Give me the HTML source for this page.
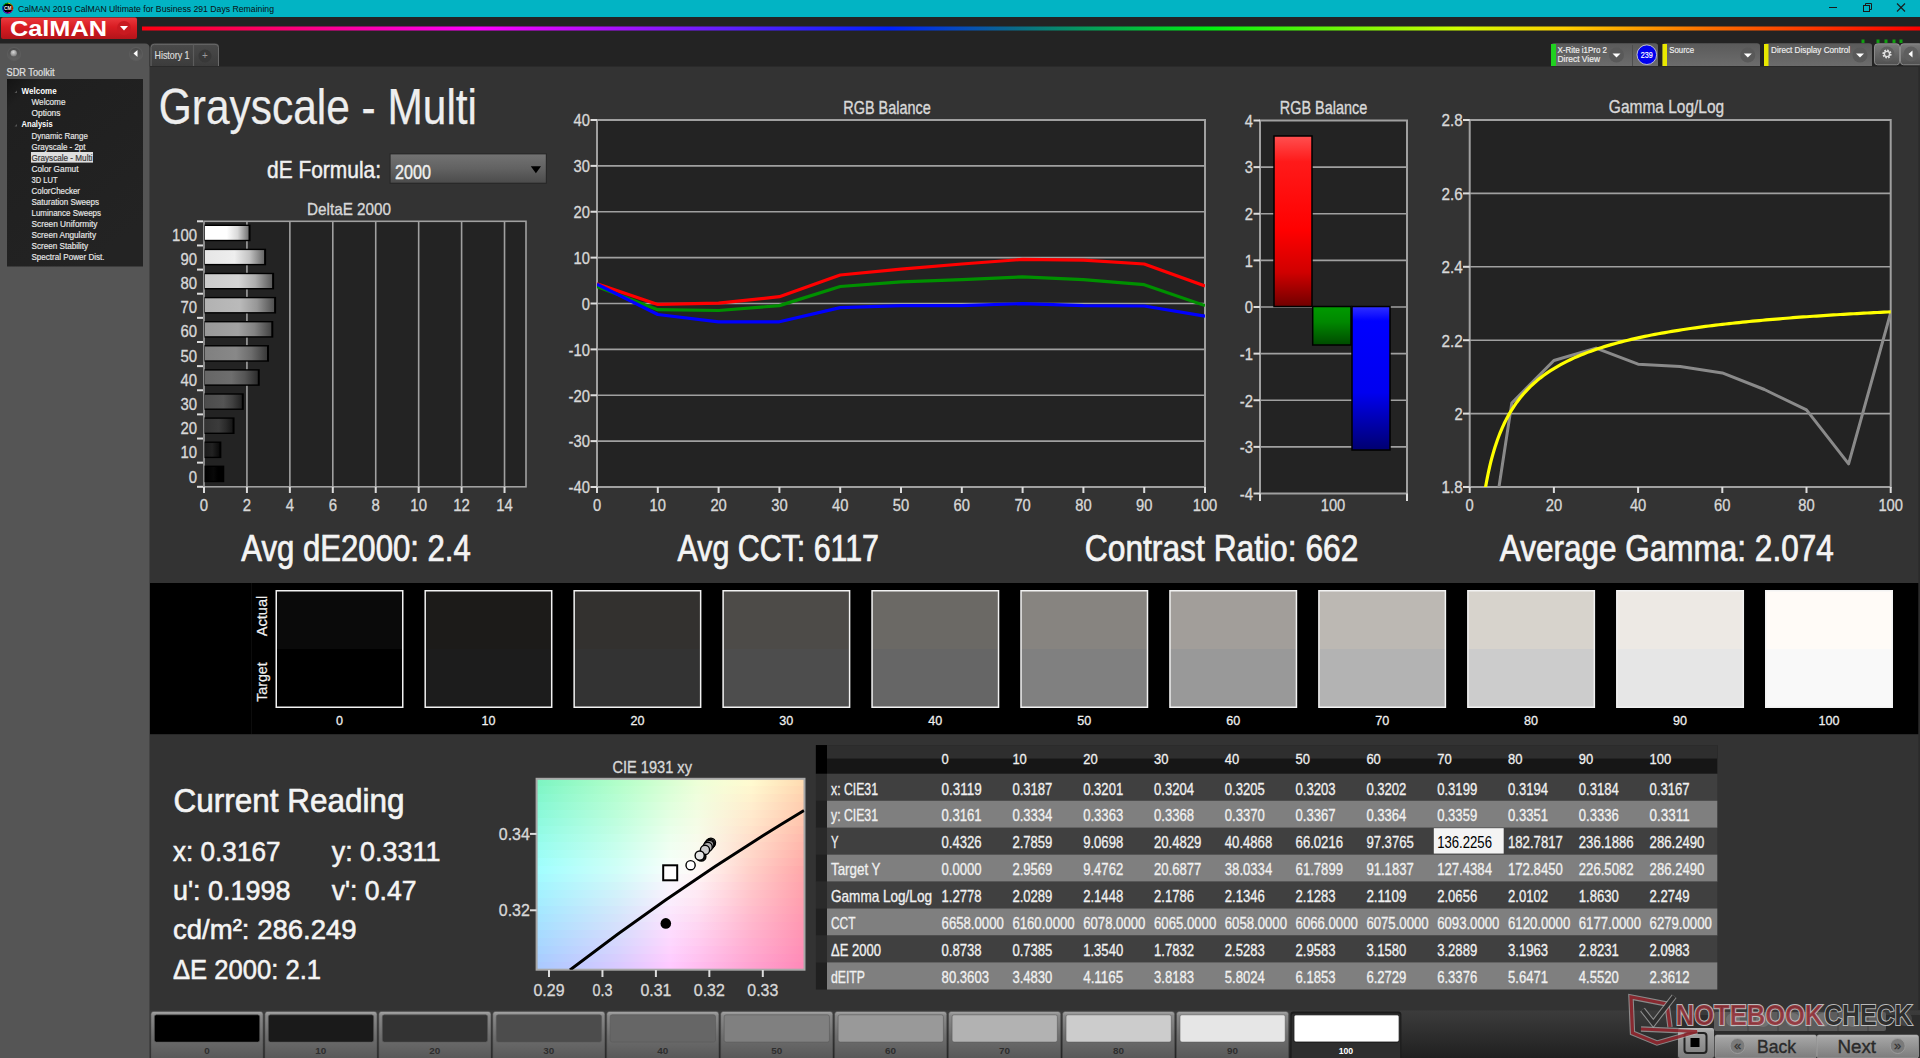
<!DOCTYPE html>
<html><head><meta charset="utf-8"><title>CalMAN Grayscale - Multi</title>
<style>html,body{margin:0;padding:0;background:#333;overflow:hidden;width:1920px;height:1058px}svg{display:block}text{font-family:"Liberation Sans",sans-serif}</style>
</head><body>
<svg width="1920" height="1058" viewBox="0 0 1920 1058" font-family="Liberation Sans, sans-serif">
<defs><linearGradient id="gLogo" x1="0" y1="0" x2="0" y2="1"><stop offset="0" stop-color="#ea3a3e"/><stop offset="0.45" stop-color="#d81c22"/><stop offset="1" stop-color="#b3141a"/></linearGradient><linearGradient id="gRain" x1="0" y1="0" x2="1" y2="0"><stop offset="0" stop-color="#ff0010"/><stop offset="0.19" stop-color="#ff00ff"/><stop offset="0.33" stop-color="#6020ff"/><stop offset="0.42" stop-color="#0020ff"/><stop offset="0.49" stop-color="#0a6a8a"/><stop offset="0.6" stop-color="#00ee10"/><stop offset="0.74" stop-color="#d0ff00"/><stop offset="0.8" stop-color="#ffd000"/><stop offset="0.88" stop-color="#ff7000"/><stop offset="1" stop-color="#ff0000"/></linearGradient><linearGradient id="gBtn" x1="0" y1="0" x2="0" y2="1"><stop offset="0" stop-color="#4a4a4a"/><stop offset="1" stop-color="#626262"/></linearGradient><radialGradient id="gDot" cx="0.45" cy="0.35" r="0.7"><stop offset="0" stop-color="#d8d8d8"/><stop offset="1" stop-color="#777"/></radialGradient><linearGradient id="gTree" x1="0" y1="0" x2="0.6" y2="1"><stop offset="0" stop-color="#141414"/><stop offset="0.12" stop-color="#1f1f1f"/><stop offset="1" stop-color="#232323"/></linearGradient><linearGradient id="gTab" x1="0" y1="0" x2="0" y2="1"><stop offset="0" stop-color="#4a4a4a"/><stop offset="1" stop-color="#3c3c3c"/></linearGradient><linearGradient id="gBox" x1="0" y1="0" x2="0" y2="1"><stop offset="0" stop-color="#5a5a5a"/><stop offset="1" stop-color="#6c6c6c"/></linearGradient><linearGradient id="gSq" x1="0" y1="0" x2="0" y2="1"><stop offset="0" stop-color="#7a7a7a"/><stop offset="1" stop-color="#505050"/></linearGradient><linearGradient id="gDrop" x1="0" y1="0" x2="0" y2="1"><stop offset="0" stop-color="#727272"/><stop offset="0.5" stop-color="#626262"/><stop offset="1" stop-color="#4c4c4c"/></linearGradient><linearGradient id="gDE100" x1="0" y1="0" x2="1" y2="0"><stop offset="0" stop-color="rgb(255,255,255)"/><stop offset="0.5" stop-color="rgb(255,255,255)"/><stop offset="0.75" stop-color="rgb(216,216,216)"/><stop offset="1" stop-color="rgb(114,114,114)"/></linearGradient><linearGradient id="gDE90" x1="0" y1="0" x2="1" y2="0"><stop offset="0" stop-color="rgb(230,230,230)"/><stop offset="0.5" stop-color="rgb(238,238,238)"/><stop offset="0.75" stop-color="rgb(195,195,195)"/><stop offset="1" stop-color="rgb(103,103,103)"/></linearGradient><linearGradient id="gDE80" x1="0" y1="0" x2="1" y2="0"><stop offset="0" stop-color="rgb(204,204,204)"/><stop offset="0.5" stop-color="rgb(212,212,212)"/><stop offset="0.75" stop-color="rgb(173,173,173)"/><stop offset="1" stop-color="rgb(91,91,91)"/></linearGradient><linearGradient id="gDE70" x1="0" y1="0" x2="1" y2="0"><stop offset="0" stop-color="rgb(178,178,178)"/><stop offset="0.5" stop-color="rgb(186,186,186)"/><stop offset="0.75" stop-color="rgb(151,151,151)"/><stop offset="1" stop-color="rgb(80,80,80)"/></linearGradient><linearGradient id="gDE60" x1="0" y1="0" x2="1" y2="0"><stop offset="0" stop-color="rgb(153,153,153)"/><stop offset="0.5" stop-color="rgb(161,161,161)"/><stop offset="0.75" stop-color="rgb(130,130,130)"/><stop offset="1" stop-color="rgb(68,68,68)"/></linearGradient><linearGradient id="gDE50" x1="0" y1="0" x2="1" y2="0"><stop offset="0" stop-color="rgb(128,128,128)"/><stop offset="0.5" stop-color="rgb(136,136,136)"/><stop offset="0.75" stop-color="rgb(108,108,108)"/><stop offset="1" stop-color="rgb(57,57,57)"/></linearGradient><linearGradient id="gDE40" x1="0" y1="0" x2="1" y2="0"><stop offset="0" stop-color="rgb(102,102,102)"/><stop offset="0.5" stop-color="rgb(110,110,110)"/><stop offset="0.75" stop-color="rgb(86,86,86)"/><stop offset="1" stop-color="rgb(45,45,45)"/></linearGradient><linearGradient id="gDE30" x1="0" y1="0" x2="1" y2="0"><stop offset="0" stop-color="rgb(76,76,76)"/><stop offset="0.5" stop-color="rgb(84,84,84)"/><stop offset="0.75" stop-color="rgb(64,64,64)"/><stop offset="1" stop-color="rgb(34,34,34)"/></linearGradient><linearGradient id="gDE20" x1="0" y1="0" x2="1" y2="0"><stop offset="0" stop-color="rgb(51,51,51)"/><stop offset="0.5" stop-color="rgb(59,59,59)"/><stop offset="0.75" stop-color="rgb(43,43,43)"/><stop offset="1" stop-color="rgb(22,22,22)"/></linearGradient><linearGradient id="gDE10" x1="0" y1="0" x2="1" y2="0"><stop offset="0" stop-color="rgb(26,26,26)"/><stop offset="0.5" stop-color="rgb(34,34,34)"/><stop offset="0.75" stop-color="rgb(22,22,22)"/><stop offset="1" stop-color="rgb(11,11,11)"/></linearGradient><linearGradient id="gDE0" x1="0" y1="0" x2="1" y2="0"><stop offset="0" stop-color="rgb(0,0,0)"/><stop offset="0.5" stop-color="rgb(8,8,8)"/><stop offset="0.75" stop-color="rgb(0,0,0)"/><stop offset="1" stop-color="rgb(0,0,0)"/></linearGradient><linearGradient id="gRed" x1="0" y1="0" x2="0" y2="1"><stop offset="0" stop-color="#ff5050"/><stop offset="0.15" stop-color="#ff1a1a"/><stop offset="0.55" stop-color="#ff0000"/><stop offset="0.8" stop-color="#d00000"/><stop offset="1" stop-color="#700000"/></linearGradient><linearGradient id="gGrn" x1="0" y1="0" x2="0" y2="1"><stop offset="0" stop-color="#009a00"/><stop offset="0.4" stop-color="#008800"/><stop offset="1" stop-color="#004a00"/></linearGradient><linearGradient id="gBlu" x1="0" y1="0" x2="0" y2="1"><stop offset="0" stop-color="#3030ff"/><stop offset="0.1" stop-color="#0000ff"/><stop offset="0.6" stop-color="#0000f0"/><stop offset="1" stop-color="#000070"/></linearGradient><linearGradient id="gCie0" x1="0" y1="0" x2="1" y2="0"><stop offset="0.0" stop-color="#7cf5c3"/><stop offset="0.1" stop-color="#8df8c5"/><stop offset="0.2" stop-color="#9ffbc7"/><stop offset="0.3" stop-color="#b1fec9"/><stop offset="0.4" stop-color="#c4ffcd"/><stop offset="0.5" stop-color="#d9ffd3"/><stop offset="0.6" stop-color="#edffd8"/><stop offset="0.7" stop-color="#f7fdd5"/><stop offset="0.8" stop-color="#fffad0"/><stop offset="0.9" stop-color="#ffeac0"/><stop offset="1.0" stop-color="#ffdab0"/></linearGradient><linearGradient id="gCie1" x1="0" y1="0" x2="1" y2="0"><stop offset="0.0" stop-color="#7ff6c8"/><stop offset="0.1" stop-color="#91f9ca"/><stop offset="0.2" stop-color="#a2fbcc"/><stop offset="0.3" stop-color="#b4fecd"/><stop offset="0.4" stop-color="#c7ffd1"/><stop offset="0.5" stop-color="#dbffd7"/><stop offset="0.6" stop-color="#eefedb"/><stop offset="0.7" stop-color="#f8fbd6"/><stop offset="0.8" stop-color="#fff6cf"/><stop offset="0.9" stop-color="#ffe6bf"/><stop offset="1.0" stop-color="#ffd5af"/></linearGradient><linearGradient id="gCie2" x1="0" y1="0" x2="1" y2="0"><stop offset="0.0" stop-color="#82f7ce"/><stop offset="0.1" stop-color="#94f9cf"/><stop offset="0.2" stop-color="#a5fcd0"/><stop offset="0.3" stop-color="#b6fed2"/><stop offset="0.4" stop-color="#caffd5"/><stop offset="0.5" stop-color="#deffda"/><stop offset="0.6" stop-color="#f0fede"/><stop offset="0.7" stop-color="#f9f8d7"/><stop offset="0.8" stop-color="#fff2ce"/><stop offset="0.9" stop-color="#ffe1be"/><stop offset="1.0" stop-color="#ffd0ae"/></linearGradient><linearGradient id="gCie3" x1="0" y1="0" x2="1" y2="0"><stop offset="0.0" stop-color="#86f8d4"/><stop offset="0.1" stop-color="#97fad4"/><stop offset="0.2" stop-color="#a8fcd5"/><stop offset="0.3" stop-color="#b9fed6"/><stop offset="0.4" stop-color="#cdffda"/><stop offset="0.5" stop-color="#e1ffde"/><stop offset="0.6" stop-color="#f1fde0"/><stop offset="0.7" stop-color="#f9f6d8"/><stop offset="0.8" stop-color="#ffeece"/><stop offset="0.9" stop-color="#ffddbe"/><stop offset="1.0" stop-color="#ffccae"/></linearGradient><linearGradient id="gCie4" x1="0" y1="0" x2="1" y2="0"><stop offset="0.0" stop-color="#89f9d9"/><stop offset="0.1" stop-color="#9afbda"/><stop offset="0.2" stop-color="#abfcda"/><stop offset="0.3" stop-color="#bcfeda"/><stop offset="0.4" stop-color="#d0ffde"/><stop offset="0.5" stop-color="#e4ffe2"/><stop offset="0.6" stop-color="#f3fde3"/><stop offset="0.7" stop-color="#faf4d9"/><stop offset="0.8" stop-color="#ffeacd"/><stop offset="0.9" stop-color="#ffd9bd"/><stop offset="1.0" stop-color="#ffc7ad"/></linearGradient><linearGradient id="gCie5" x1="0" y1="0" x2="1" y2="0"><stop offset="0.0" stop-color="#8dfadf"/><stop offset="0.1" stop-color="#9dfbdf"/><stop offset="0.2" stop-color="#aefddf"/><stop offset="0.3" stop-color="#bffedf"/><stop offset="0.4" stop-color="#d3ffe2"/><stop offset="0.5" stop-color="#e7ffe6"/><stop offset="0.6" stop-color="#f5fce6"/><stop offset="0.7" stop-color="#fbf2da"/><stop offset="0.8" stop-color="#ffe7cc"/><stop offset="0.9" stop-color="#ffd5bc"/><stop offset="1.0" stop-color="#ffc3ac"/></linearGradient><linearGradient id="gCie6" x1="0" y1="0" x2="1" y2="0"><stop offset="0.0" stop-color="#90fbe4"/><stop offset="0.1" stop-color="#a1fce4"/><stop offset="0.2" stop-color="#b1fde4"/><stop offset="0.3" stop-color="#c2fee3"/><stop offset="0.4" stop-color="#d6ffe6"/><stop offset="0.5" stop-color="#eaffea"/><stop offset="0.6" stop-color="#f6fce8"/><stop offset="0.7" stop-color="#fbf0db"/><stop offset="0.8" stop-color="#ffe3cb"/><stop offset="0.9" stop-color="#ffd0bb"/><stop offset="1.0" stop-color="#ffbeab"/></linearGradient><linearGradient id="gCie7" x1="0" y1="0" x2="1" y2="0"><stop offset="0.0" stop-color="#93fcea"/><stop offset="0.1" stop-color="#a4fde9"/><stop offset="0.2" stop-color="#b4fee8"/><stop offset="0.3" stop-color="#c5ffe8"/><stop offset="0.4" stop-color="#d9ffea"/><stop offset="0.5" stop-color="#edffee"/><stop offset="0.6" stop-color="#f8fbeb"/><stop offset="0.7" stop-color="#fceedc"/><stop offset="0.8" stop-color="#ffdfcb"/><stop offset="0.9" stop-color="#ffccbb"/><stop offset="1.0" stop-color="#ffb9ab"/></linearGradient><linearGradient id="gCie8" x1="0" y1="0" x2="1" y2="0"><stop offset="0.0" stop-color="#97fdef"/><stop offset="0.1" stop-color="#a7fdee"/><stop offset="0.2" stop-color="#b7feed"/><stop offset="0.3" stop-color="#c8ffec"/><stop offset="0.4" stop-color="#dcffee"/><stop offset="0.5" stop-color="#f0fff1"/><stop offset="0.6" stop-color="#f9fbee"/><stop offset="0.7" stop-color="#fdecdd"/><stop offset="0.8" stop-color="#ffdbca"/><stop offset="0.9" stop-color="#ffc8ba"/><stop offset="1.0" stop-color="#ffb5aa"/></linearGradient><linearGradient id="gCie9" x1="0" y1="0" x2="1" y2="0"><stop offset="0.0" stop-color="#9afdf5"/><stop offset="0.1" stop-color="#aafef3"/><stop offset="0.2" stop-color="#bbfef2"/><stop offset="0.3" stop-color="#cbfff0"/><stop offset="0.4" stop-color="#dffff3"/><stop offset="0.5" stop-color="#f3fff5"/><stop offset="0.6" stop-color="#fbfaf1"/><stop offset="0.7" stop-color="#feeadf"/><stop offset="0.8" stop-color="#ffd7c9"/><stop offset="0.9" stop-color="#ffc4b9"/><stop offset="1.0" stop-color="#ffb0a9"/></linearGradient><linearGradient id="gCie10" x1="0" y1="0" x2="1" y2="0"><stop offset="0.0" stop-color="#9dfefb"/><stop offset="0.1" stop-color="#adfff9"/><stop offset="0.2" stop-color="#befff7"/><stop offset="0.3" stop-color="#cefff5"/><stop offset="0.4" stop-color="#e2fff7"/><stop offset="0.5" stop-color="#f6fff9"/><stop offset="0.6" stop-color="#fdfaf3"/><stop offset="0.7" stop-color="#fee8e0"/><stop offset="0.8" stop-color="#ffd3c9"/><stop offset="0.9" stop-color="#ffbfb9"/><stop offset="1.0" stop-color="#ffaca9"/></linearGradient><linearGradient id="gCie11" x1="0" y1="0" x2="1" y2="0"><stop offset="0.0" stop-color="#a0feff"/><stop offset="0.1" stop-color="#b0fefd"/><stop offset="0.2" stop-color="#c0fefa"/><stop offset="0.3" stop-color="#d0fef8"/><stop offset="0.4" stop-color="#e4fefa"/><stop offset="0.5" stop-color="#f8fefc"/><stop offset="0.6" stop-color="#fef8f5"/><stop offset="0.7" stop-color="#ffe5e0"/><stop offset="0.8" stop-color="#ffcfc8"/><stop offset="0.9" stop-color="#ffbbb8"/><stop offset="1.0" stop-color="#ffa7a8"/></linearGradient><linearGradient id="gCie12" x1="0" y1="0" x2="1" y2="0"><stop offset="0.0" stop-color="#a1faff"/><stop offset="0.1" stop-color="#b1fafd"/><stop offset="0.2" stop-color="#c1fafb"/><stop offset="0.3" stop-color="#d1faf9"/><stop offset="0.4" stop-color="#e5fafa"/><stop offset="0.5" stop-color="#f9fafc"/><stop offset="0.6" stop-color="#fef3f5"/><stop offset="0.7" stop-color="#ffe1e0"/><stop offset="0.8" stop-color="#ffccc9"/><stop offset="0.9" stop-color="#ffb8b9"/><stop offset="1.0" stop-color="#ffa5aa"/></linearGradient><linearGradient id="gCie13" x1="0" y1="0" x2="1" y2="0"><stop offset="0.0" stop-color="#a1f5ff"/><stop offset="0.1" stop-color="#b1f5fd"/><stop offset="0.2" stop-color="#c1f5fb"/><stop offset="0.3" stop-color="#d1f5f9"/><stop offset="0.4" stop-color="#e5f5fb"/><stop offset="0.5" stop-color="#f9f5fd"/><stop offset="0.6" stop-color="#feeef4"/><stop offset="0.7" stop-color="#ffdce0"/><stop offset="0.8" stop-color="#ffc8ca"/><stop offset="0.9" stop-color="#ffb5ba"/><stop offset="1.0" stop-color="#ffa2ab"/></linearGradient><linearGradient id="gCie14" x1="0" y1="0" x2="1" y2="0"><stop offset="0.0" stop-color="#a2f1ff"/><stop offset="0.1" stop-color="#b2f1fd"/><stop offset="0.2" stop-color="#c2f1fc"/><stop offset="0.3" stop-color="#d2f1fa"/><stop offset="0.4" stop-color="#e6f1fb"/><stop offset="0.5" stop-color="#faf1fd"/><stop offset="0.6" stop-color="#fee9f4"/><stop offset="0.7" stop-color="#ffd8e0"/><stop offset="0.8" stop-color="#ffc4ca"/><stop offset="0.9" stop-color="#ffb2bb"/><stop offset="1.0" stop-color="#ffa0ac"/></linearGradient><linearGradient id="gCie15" x1="0" y1="0" x2="1" y2="0"><stop offset="0.0" stop-color="#a3edff"/><stop offset="0.1" stop-color="#b3edfd"/><stop offset="0.2" stop-color="#c3edfc"/><stop offset="0.3" stop-color="#d3edfa"/><stop offset="0.4" stop-color="#e6edfc"/><stop offset="0.5" stop-color="#faedfd"/><stop offset="0.6" stop-color="#fee5f3"/><stop offset="0.7" stop-color="#ffd4e0"/><stop offset="0.8" stop-color="#ffc1cb"/><stop offset="0.9" stop-color="#ffafbc"/><stop offset="1.0" stop-color="#ff9dad"/></linearGradient><linearGradient id="gCie16" x1="0" y1="0" x2="1" y2="0"><stop offset="0.0" stop-color="#a3e8ff"/><stop offset="0.1" stop-color="#b3e8fe"/><stop offset="0.2" stop-color="#c3e8fc"/><stop offset="0.3" stop-color="#d3e8fb"/><stop offset="0.4" stop-color="#e7e8fc"/><stop offset="0.5" stop-color="#fbe8fd"/><stop offset="0.6" stop-color="#fee0f3"/><stop offset="0.7" stop-color="#ffcfe0"/><stop offset="0.8" stop-color="#ffbdcc"/><stop offset="0.9" stop-color="#ffacbd"/><stop offset="1.0" stop-color="#ff9baf"/></linearGradient><linearGradient id="gCie17" x1="0" y1="0" x2="1" y2="0"><stop offset="0.0" stop-color="#a4e4ff"/><stop offset="0.1" stop-color="#b4e4fe"/><stop offset="0.2" stop-color="#c4e4fd"/><stop offset="0.3" stop-color="#d4e4fb"/><stop offset="0.4" stop-color="#e8e4fc"/><stop offset="0.5" stop-color="#fbe4fd"/><stop offset="0.6" stop-color="#fedbf2"/><stop offset="0.7" stop-color="#ffcbe0"/><stop offset="0.8" stop-color="#ffb9cd"/><stop offset="0.9" stop-color="#ffa9be"/><stop offset="1.0" stop-color="#ff98b0"/></linearGradient><linearGradient id="gCie18" x1="0" y1="0" x2="1" y2="0"><stop offset="0.0" stop-color="#a5e0ff"/><stop offset="0.1" stop-color="#b5e0fe"/><stop offset="0.2" stop-color="#c5e0fd"/><stop offset="0.3" stop-color="#d5e0fc"/><stop offset="0.4" stop-color="#e8e0fd"/><stop offset="0.5" stop-color="#fce0fe"/><stop offset="0.6" stop-color="#fed6f2"/><stop offset="0.7" stop-color="#ffc7e0"/><stop offset="0.8" stop-color="#ffb6cd"/><stop offset="0.9" stop-color="#ffa6bf"/><stop offset="1.0" stop-color="#ff96b1"/></linearGradient><linearGradient id="gCie19" x1="0" y1="0" x2="1" y2="0"><stop offset="0.0" stop-color="#a5dbff"/><stop offset="0.1" stop-color="#b5dbfe"/><stop offset="0.2" stop-color="#c5dbfd"/><stop offset="0.3" stop-color="#d5dbfd"/><stop offset="0.4" stop-color="#e9dbfd"/><stop offset="0.5" stop-color="#fddbfe"/><stop offset="0.6" stop-color="#ffd1f1"/><stop offset="0.7" stop-color="#ffc2e0"/><stop offset="0.8" stop-color="#ffb2ce"/><stop offset="0.9" stop-color="#ffa3c0"/><stop offset="1.0" stop-color="#ff93b2"/></linearGradient><linearGradient id="gCie20" x1="0" y1="0" x2="1" y2="0"><stop offset="0.0" stop-color="#a6d7ff"/><stop offset="0.1" stop-color="#b6d7fe"/><stop offset="0.2" stop-color="#c6d7fe"/><stop offset="0.3" stop-color="#d6d7fd"/><stop offset="0.4" stop-color="#e9d7fe"/><stop offset="0.5" stop-color="#fdd7fe"/><stop offset="0.6" stop-color="#ffccf1"/><stop offset="0.7" stop-color="#ffbee0"/><stop offset="0.8" stop-color="#ffaecf"/><stop offset="0.9" stop-color="#ffa0c1"/><stop offset="1.0" stop-color="#ff91b4"/></linearGradient><linearGradient id="gCie21" x1="0" y1="0" x2="1" y2="0"><stop offset="0.0" stop-color="#a6d3ff"/><stop offset="0.1" stop-color="#b6d3ff"/><stop offset="0.2" stop-color="#c6d3fe"/><stop offset="0.3" stop-color="#d6d3fe"/><stop offset="0.4" stop-color="#ead3fe"/><stop offset="0.5" stop-color="#fed3fe"/><stop offset="0.6" stop-color="#ffc7f1"/><stop offset="0.7" stop-color="#ffb9e0"/><stop offset="0.8" stop-color="#ffabd0"/><stop offset="0.9" stop-color="#ff9dc2"/><stop offset="1.0" stop-color="#ff8eb5"/></linearGradient><linearGradient id="gCie22" x1="0" y1="0" x2="1" y2="0"><stop offset="0.0" stop-color="#a7ceff"/><stop offset="0.1" stop-color="#b7ceff"/><stop offset="0.2" stop-color="#c7cefe"/><stop offset="0.3" stop-color="#d7cefe"/><stop offset="0.4" stop-color="#ebcefe"/><stop offset="0.5" stop-color="#feceff"/><stop offset="0.6" stop-color="#ffc3f0"/><stop offset="0.7" stop-color="#ffb5e0"/><stop offset="0.8" stop-color="#ffa7d0"/><stop offset="0.9" stop-color="#ff99c3"/><stop offset="1.0" stop-color="#ff8cb6"/></linearGradient><linearGradient id="gCie23" x1="0" y1="0" x2="1" y2="0"><stop offset="0.0" stop-color="#a8caff"/><stop offset="0.1" stop-color="#b8caff"/><stop offset="0.2" stop-color="#c8caff"/><stop offset="0.3" stop-color="#d8caff"/><stop offset="0.4" stop-color="#ebcaff"/><stop offset="0.5" stop-color="#ffcaff"/><stop offset="0.6" stop-color="#ffbef0"/><stop offset="0.7" stop-color="#ffb1e0"/><stop offset="0.8" stop-color="#ffa3d1"/><stop offset="0.9" stop-color="#ff96c4"/><stop offset="1.0" stop-color="#ff89b7"/></linearGradient><linearGradient id="gBar" x1="0" y1="0" x2="0" y2="1"><stop offset="0" stop-color="#3c3c3c"/><stop offset="1" stop-color="#202020"/></linearGradient><linearGradient id="gSw" x1="0" y1="0" x2="0" y2="1"><stop offset="0" stop-color="#a8a8a8"/><stop offset="0.08" stop-color="#8a8a8a"/><stop offset="0.5" stop-color="#6e6e6e"/><stop offset="1" stop-color="#555555"/></linearGradient><linearGradient id="gSwSel" x1="0" y1="0" x2="0" y2="1"><stop offset="0" stop-color="#3a3a3a"/><stop offset="0.1" stop-color="#222"/><stop offset="1" stop-color="#111"/></linearGradient><linearGradient id="gNav" x1="0" y1="0" x2="0" y2="1"><stop offset="0" stop-color="#b8b8b8"/><stop offset="0.12" stop-color="#a4a4a4"/><stop offset="0.6" stop-color="#8e8e8e"/><stop offset="1" stop-color="#7c7c7c"/></linearGradient></defs>
<rect x="0.00" y="0.00" width="1920.00" height="1058.00" fill="#333333" />
<rect x="0.00" y="0.00" width="1920.00" height="17.00" fill="#02b4c4" />
<circle cx="7.8" cy="8.1" r="5.4" fill="#000"/>
<path d="M12.13,5.60 A5,5 0 0 1 12.13,10.60" fill="none" stroke="#ff2000" stroke-width="0.9"/>
<path d="M12.13,10.60 A5,5 0 0 1 7.80,13.10" fill="none" stroke="#ff00c0" stroke-width="0.9"/>
<path d="M7.80,13.10 A5,5 0 0 1 3.47,10.60" fill="none" stroke="#8000ff" stroke-width="0.9"/>
<path d="M3.47,10.60 A5,5 0 0 1 3.47,5.60" fill="none" stroke="#0040ff" stroke-width="0.9"/>
<path d="M3.47,5.60 A5,5 0 0 1 7.80,3.10" fill="none" stroke="#00c000" stroke-width="0.9"/>
<path d="M7.80,3.10 A5,5 0 0 1 12.13,5.60" fill="none" stroke="#e0e000" stroke-width="0.9"/>
<text x="7.80" y="10.40" font-size="5.60" fill="#f0f0f0" text-anchor="middle" font-weight="bold" textLength="7.60" lengthAdjust="spacingAndGlyphs" >CM</text>
<text x="18.00" y="11.80" font-size="9.45" fill="#0a1418" stroke="#0a1418" stroke-width="0.05" textLength="256.00" lengthAdjust="spacingAndGlyphs" >CalMAN 2019 CalMAN Ultimate for Business 291 Days Remaining</text>
<line x1="1829.00" y1="7.50" x2="1837.00" y2="7.50" stroke="#1a1a1a" stroke-width="1" />
<rect x="1863.5" y="5.5" width="6" height="6" fill="none" stroke="#1a1a1a" stroke-width="1"/>
<path d="M1865.5 5.5 V3.5 H1871.5 V9.5 H1869.5" fill="none" stroke="#1a1a1a" stroke-width="1"/>
<line x1="1897.00" y1="3.50" x2="1905.00" y2="11.50" stroke="#1a1a1a" stroke-width="1.1" />
<line x1="1905.00" y1="3.50" x2="1897.00" y2="11.50" stroke="#1a1a1a" stroke-width="1.1" />
<rect x="0.00" y="17.00" width="1920.00" height="49.50" fill="#232323" />
<rect x="1" y="17.5" width="136" height="21.5" rx="2" fill="url(#gLogo)"/>
<text x="10.00" y="35.50" font-size="22.09" fill="#ffffff" font-weight="bold" textLength="97.00" lengthAdjust="spacingAndGlyphs" >CalMAN</text>
<circle cx="124" cy="28" r="7" fill="#c81a20"/>
<path d="M120 26 L128 26 L124 30.5 Z" fill="#fff"/>
<rect x="142.00" y="26.50" width="1778.00" height="4.00" fill="url(#gRain)" />
<path d="M0 43.5 H145 Q149.5 43.5 149.5 48 V1058 H0 Z" fill="#555555"/>
<circle cx="14" cy="54" r="6.6" fill="url(#gBtn)" stroke="#5c5c5c" stroke-width="1.2"/>
<circle cx="13.7" cy="53.2" r="3.2" fill="url(#gDot)"/>
<circle cx="136" cy="54" r="6.6" fill="url(#gBtn)" stroke="#5c5c5c" stroke-width="1.2"/>
<path d="M137.5 50 L133.5 53.5 L137.5 57 Z" fill="#fff"/>
<text x="6.50" y="75.70" font-size="10.17" fill="#e0e0e0" stroke="#e0e0e0" stroke-width="0.20" textLength="48.00" lengthAdjust="spacingAndGlyphs" >SDR Toolkit</text>
<rect x="7.00" y="79.00" width="136.00" height="187.50" fill="url(#gTree)" />
<path d="M14.5 93 L17 90.5 L17 93 Z" fill="#555"/>
<text x="21.60" y="93.50" font-size="9.01" fill="#ffffff" font-weight="bold" textLength="35.00" lengthAdjust="spacingAndGlyphs" >Welcome</text>
<text x="31.50" y="104.70" font-size="8.72" fill="#e8e8e8" stroke="#e8e8e8" stroke-width="0.17" textLength="34.00" lengthAdjust="spacingAndGlyphs" >Welcome</text>
<text x="31.50" y="115.80" font-size="8.72" fill="#e8e8e8" stroke="#e8e8e8" stroke-width="0.17" textLength="29.00" lengthAdjust="spacingAndGlyphs" >Options</text>
<path d="M14.5 126.5 L17 124 L17 126.5 Z" fill="#555"/>
<text x="21.60" y="126.80" font-size="9.01" fill="#ffffff" font-weight="bold" textLength="31.00" lengthAdjust="spacingAndGlyphs" >Analysis</text>
<text x="31.50" y="138.90" font-size="8.72" fill="#e8e8e8" stroke="#e8e8e8" stroke-width="0.17" textLength="56.30" lengthAdjust="spacingAndGlyphs" >Dynamic Range</text>
<text x="31.50" y="149.94" font-size="8.72" fill="#e8e8e8" stroke="#e8e8e8" stroke-width="0.17" textLength="54.00" lengthAdjust="spacingAndGlyphs" >Grayscale - 2pt</text>
<rect x="31.00" y="152.00" width="62.00" height="10.60" fill="#dedede" />
<text x="31.50" y="160.98" font-size="8.72" fill="#333" stroke="#333" stroke-width="0.17" textLength="61.00" lengthAdjust="spacingAndGlyphs" >Grayscale - Multi</text>
<text x="31.50" y="172.02" font-size="8.72" fill="#e8e8e8" stroke="#e8e8e8" stroke-width="0.17" textLength="47.00" lengthAdjust="spacingAndGlyphs" >Color Gamut</text>
<text x="31.50" y="183.06" font-size="8.72" fill="#e8e8e8" stroke="#e8e8e8" stroke-width="0.17" textLength="26.00" lengthAdjust="spacingAndGlyphs" >3D LUT</text>
<text x="31.50" y="194.10" font-size="8.72" fill="#e8e8e8" stroke="#e8e8e8" stroke-width="0.17" textLength="48.50" lengthAdjust="spacingAndGlyphs" >ColorChecker</text>
<text x="31.50" y="205.14" font-size="8.72" fill="#e8e8e8" stroke="#e8e8e8" stroke-width="0.17" textLength="67.50" lengthAdjust="spacingAndGlyphs" >Saturation Sweeps</text>
<text x="31.50" y="216.18" font-size="8.72" fill="#e8e8e8" stroke="#e8e8e8" stroke-width="0.17" textLength="69.50" lengthAdjust="spacingAndGlyphs" >Luminance Sweeps</text>
<text x="31.50" y="227.22" font-size="8.72" fill="#e8e8e8" stroke="#e8e8e8" stroke-width="0.17" textLength="66.00" lengthAdjust="spacingAndGlyphs" >Screen Uniformity</text>
<text x="31.50" y="238.26" font-size="8.72" fill="#e8e8e8" stroke="#e8e8e8" stroke-width="0.17" textLength="64.50" lengthAdjust="spacingAndGlyphs" >Screen Angularity</text>
<text x="31.50" y="249.30" font-size="8.72" fill="#e8e8e8" stroke="#e8e8e8" stroke-width="0.17" textLength="56.50" lengthAdjust="spacingAndGlyphs" >Screen Stability</text>
<text x="31.50" y="260.34" font-size="8.72" fill="#e8e8e8" stroke="#e8e8e8" stroke-width="0.17" textLength="73.00" lengthAdjust="spacingAndGlyphs" >Spectral Power Dist.</text>
<path d="M150.5 66 V47 Q150.5 43.5 154 43.5 H215.5 Q219 43.5 219 47 V66 Z" fill="url(#gTab)"/>
<path d="M151 66 V47.5 Q151 44.3 154.5 44.3 H215 Q218.5 44.3 218.5 47.5 V66" fill="none" stroke="#6a6a6a" stroke-width="1"/>
<line x1="193.50" y1="44.50" x2="193.50" y2="66.00" stroke="#5c5c5c" stroke-width="1.2" />
<text x="154.50" y="59.00" font-size="10.17" fill="#dcdcdc" stroke="#dcdcdc" stroke-width="0.20" textLength="35.00" lengthAdjust="spacingAndGlyphs" >History 1</text>
<circle cx="205" cy="56" r="6.5" fill="#383838"/>
<text x="205.00" y="59.30" font-size="10.00" fill="#9a9a9a" text-anchor="middle" >+</text>
<path d="M1551 66 V46 Q1551 43.2 1554 43.2 H1655 Q1658 43.2 1658 46 V66 Z" fill="url(#gBox)"/>
<rect x="1551.00" y="44.00" width="5.00" height="22.00" fill="#20d020" />
<text x="1557.50" y="52.80" font-size="9.01" fill="#eee" stroke="#eee" stroke-width="0.18" textLength="49.50" lengthAdjust="spacingAndGlyphs" >X-Rite i1Pro 2</text>
<text x="1557.50" y="62.40" font-size="9.01" fill="#eee" stroke="#eee" stroke-width="0.18" textLength="42.50" lengthAdjust="spacingAndGlyphs" >Direct View</text>
<circle cx="1616.5" cy="55" r="7.5" fill="#595959"/>
<path d="M1612.5 53.5 H1620.5 L1616.5 57.5 Z" fill="#fff"/>
<line x1="1632.50" y1="45.00" x2="1632.50" y2="66.00" stroke="#4e4e4e" stroke-width="1" />
<circle cx="1646.8" cy="54.7" r="9.8" fill="#0000ee" stroke="#ddd" stroke-width="0.8"/>
<text x="1646.80" y="57.50" font-size="8.50" fill="#fff" stroke="#fff" stroke-width="0.17" text-anchor="middle" textLength="12.00" lengthAdjust="spacingAndGlyphs" >239</text>
<path d="M1662.5 66 V46 Q1662.5 43.2 1665.5 43.2 H1757 Q1760 43.2 1760 46 V66 Z" fill="url(#gBox)"/>
<rect x="1662.50" y="44.00" width="4.50" height="22.00" fill="#e8e800" />
<text x="1669.30" y="52.80" font-size="9.01" fill="#eee" stroke="#eee" stroke-width="0.18" textLength="24.80" lengthAdjust="spacingAndGlyphs" >Source</text>
<circle cx="1747.8" cy="55" r="7.5" fill="#595959"/>
<path d="M1743.8 53.5 H1751.8 L1747.8 57.5 Z" fill="#fff"/>
<path d="M1764 66 V46 Q1764 43.2 1767 43.2 H1869 Q1872 43.2 1872 46 V66 Z" fill="url(#gBox)"/>
<rect x="1764.00" y="44.00" width="4.50" height="22.00" fill="#e8e800" />
<text x="1771.00" y="52.80" font-size="8.72" fill="#eee" stroke="#eee" stroke-width="0.17" textLength="79.00" lengthAdjust="spacingAndGlyphs" >Direct Display Control</text>
<circle cx="1860" cy="55" r="7.5" fill="#595959"/>
<path d="M1856 53.5 H1864 L1860 57.5 Z" fill="#fff"/>
<rect x="1861.50" y="39.50" width="3.00" height="3.50" fill="#10a010" />
<rect x="1876.50" y="39.50" width="3.00" height="3.50" fill="#10a010" />
<rect x="1884.50" y="39.50" width="3.00" height="3.50" fill="#10a010" />
<rect x="1892.50" y="39.50" width="3.00" height="3.50" fill="#10a010" />
<rect x="1899.50" y="39.50" width="3.00" height="3.50" fill="#10a010" />
<rect x="1874.5" y="43.8" width="25" height="21" rx="3" fill="url(#gSq)" stroke="#9a9a9a" stroke-width="0.8"/>
<circle cx="1887" cy="54" r="7.5" fill="#5e5e5e"/>
<circle cx="1887" cy="54" r="3.5" fill="none" stroke="#e0e0e0" stroke-width="2.2" stroke-dasharray="1.6 1.1"/>
<circle cx="1887" cy="54" r="2.6" fill="none" stroke="#e0e0e0" stroke-width="1.4"/>
<rect x="1900.5" y="43.8" width="22" height="21" rx="3" fill="url(#gSq)" stroke="#9a9a9a" stroke-width="0.8"/>
<circle cx="1911" cy="54" r="7.5" fill="#5e5e5e"/>
<path d="M1912.5 50.5 L1908.5 54 L1912.5 57.5 Z" fill="#fff"/>
<rect x="150.00" y="67.00" width="1770.00" height="991.00" fill="#333333" />
<text x="158.75" y="124.20" font-size="49.42" fill="#eeeeee" stroke="#eeeeee" stroke-width="0.25" textLength="318.30" lengthAdjust="spacingAndGlyphs" >Grayscale - Multi</text>
<text x="267.00" y="178.00" font-size="24.71" fill="#f0f0f0" stroke="#f0f0f0" stroke-width="0.49" textLength="114.00" lengthAdjust="spacingAndGlyphs" >dE Formula:</text>
<rect x="389.60" y="153.40" width="157.20" height="30.30" fill="#262626" />
<rect x="390.60" y="154.40" width="155.20" height="28.30" fill="url(#gDrop)" />
<text x="395.00" y="179.00" font-size="19.62" fill="#f0f0f0" stroke="#f0f0f0" stroke-width="0.39" textLength="36.00" lengthAdjust="spacingAndGlyphs" >2000</text>
<path d="M530.8 166.3 H541 L535.9 173.2 Z" fill="#000"/>
<text x="349.00" y="214.50" font-size="16.72" fill="#d8d8d8" stroke="#d8d8d8" stroke-width="0.33" text-anchor="middle" textLength="84.00" lengthAdjust="spacingAndGlyphs" >DeltaE 2000</text>
<rect x="204.00" y="221.30" width="322.00" height="265.50" fill="#232323" />
<line x1="246.93" y1="221.30" x2="246.93" y2="486.80" stroke="#a0a0a0" stroke-width="1.6" />
<line x1="289.87" y1="221.30" x2="289.87" y2="486.80" stroke="#a0a0a0" stroke-width="1.6" />
<line x1="332.80" y1="221.30" x2="332.80" y2="486.80" stroke="#a0a0a0" stroke-width="1.6" />
<line x1="375.73" y1="221.30" x2="375.73" y2="486.80" stroke="#a0a0a0" stroke-width="1.6" />
<line x1="418.67" y1="221.30" x2="418.67" y2="486.80" stroke="#a0a0a0" stroke-width="1.6" />
<line x1="461.60" y1="221.30" x2="461.60" y2="486.80" stroke="#a0a0a0" stroke-width="1.6" />
<line x1="504.53" y1="221.30" x2="504.53" y2="486.80" stroke="#a0a0a0" stroke-width="1.6" />
<rect x="204" y="221.3" width="322" height="265.5" fill="none" stroke="#a0a0a0" stroke-width="1.6"/>
<line x1="197.00" y1="221.30" x2="203.00" y2="221.30" stroke="#dddddd" stroke-width="2" />
<line x1="197.00" y1="245.44" x2="203.00" y2="245.44" stroke="#dddddd" stroke-width="2" />
<line x1="197.00" y1="269.57" x2="203.00" y2="269.57" stroke="#dddddd" stroke-width="2" />
<line x1="197.00" y1="293.71" x2="203.00" y2="293.71" stroke="#dddddd" stroke-width="2" />
<line x1="197.00" y1="317.85" x2="203.00" y2="317.85" stroke="#dddddd" stroke-width="2" />
<line x1="197.00" y1="341.98" x2="203.00" y2="341.98" stroke="#dddddd" stroke-width="2" />
<line x1="197.00" y1="366.12" x2="203.00" y2="366.12" stroke="#dddddd" stroke-width="2" />
<line x1="197.00" y1="390.25" x2="203.00" y2="390.25" stroke="#dddddd" stroke-width="2" />
<line x1="197.00" y1="414.39" x2="203.00" y2="414.39" stroke="#dddddd" stroke-width="2" />
<line x1="197.00" y1="438.53" x2="203.00" y2="438.53" stroke="#dddddd" stroke-width="2" />
<line x1="197.00" y1="462.66" x2="203.00" y2="462.66" stroke="#dddddd" stroke-width="2" />
<line x1="197.00" y1="486.80" x2="203.00" y2="486.80" stroke="#dddddd" stroke-width="2" />
<rect x="204.50" y="224.60" width="46.04" height="16.6" fill="#000"/>
<rect x="205.00" y="226.00" width="43.54" height="13.8" fill="url(#gDE100)"/>
<text x="197.00" y="240.50" font-size="16.86" fill="#d8d8d8" stroke="#d8d8d8" stroke-width="0.34" text-anchor="end" textLength="24.90" lengthAdjust="spacingAndGlyphs" >100</text>
<rect x="204.50" y="248.70" width="61.60" height="16.6" fill="#000"/>
<rect x="205.00" y="250.10" width="59.10" height="13.8" fill="url(#gDE90)"/>
<text x="197.00" y="264.71" font-size="16.86" fill="#d8d8d8" stroke="#d8d8d8" stroke-width="0.34" text-anchor="end" textLength="16.60" lengthAdjust="spacingAndGlyphs" >90</text>
<rect x="204.50" y="272.80" width="69.61" height="16.6" fill="#000"/>
<rect x="205.00" y="274.20" width="67.11" height="13.8" fill="url(#gDE80)"/>
<text x="197.00" y="288.92" font-size="16.86" fill="#d8d8d8" stroke="#d8d8d8" stroke-width="0.34" text-anchor="end" textLength="16.60" lengthAdjust="spacingAndGlyphs" >80</text>
<rect x="204.50" y="296.90" width="71.60" height="16.6" fill="#000"/>
<rect x="205.00" y="298.30" width="69.10" height="13.8" fill="url(#gDE70)"/>
<text x="197.00" y="313.13" font-size="16.86" fill="#d8d8d8" stroke="#d8d8d8" stroke-width="0.34" text-anchor="end" textLength="16.60" lengthAdjust="spacingAndGlyphs" >70</text>
<rect x="204.50" y="321.00" width="68.79" height="16.6" fill="#000"/>
<rect x="205.00" y="322.40" width="66.29" height="13.8" fill="url(#gDE60)"/>
<text x="197.00" y="337.34" font-size="16.86" fill="#d8d8d8" stroke="#d8d8d8" stroke-width="0.34" text-anchor="end" textLength="16.60" lengthAdjust="spacingAndGlyphs" >60</text>
<rect x="204.50" y="345.10" width="64.50" height="16.6" fill="#000"/>
<rect x="205.00" y="346.50" width="62.00" height="13.8" fill="url(#gDE50)"/>
<text x="197.00" y="361.55" font-size="16.86" fill="#d8d8d8" stroke="#d8d8d8" stroke-width="0.34" text-anchor="end" textLength="16.60" lengthAdjust="spacingAndGlyphs" >50</text>
<rect x="204.50" y="369.20" width="55.27" height="16.6" fill="#000"/>
<rect x="205.00" y="370.60" width="52.77" height="13.8" fill="url(#gDE40)"/>
<text x="197.00" y="385.76" font-size="16.86" fill="#d8d8d8" stroke="#d8d8d8" stroke-width="0.34" text-anchor="end" textLength="16.60" lengthAdjust="spacingAndGlyphs" >40</text>
<rect x="204.50" y="393.30" width="39.28" height="16.6" fill="#000"/>
<rect x="205.00" y="394.70" width="36.78" height="13.8" fill="url(#gDE30)"/>
<text x="197.00" y="409.97" font-size="16.86" fill="#d8d8d8" stroke="#d8d8d8" stroke-width="0.34" text-anchor="end" textLength="16.60" lengthAdjust="spacingAndGlyphs" >30</text>
<rect x="204.50" y="417.40" width="30.07" height="16.6" fill="#000"/>
<rect x="205.00" y="418.80" width="27.57" height="13.8" fill="url(#gDE20)"/>
<text x="197.00" y="434.18" font-size="16.86" fill="#d8d8d8" stroke="#d8d8d8" stroke-width="0.34" text-anchor="end" textLength="16.60" lengthAdjust="spacingAndGlyphs" >20</text>
<rect x="204.50" y="441.50" width="16.85" height="16.6" fill="#000"/>
<rect x="205.00" y="442.90" width="14.35" height="13.8" fill="url(#gDE10)"/>
<text x="197.00" y="458.39" font-size="16.86" fill="#d8d8d8" stroke="#d8d8d8" stroke-width="0.34" text-anchor="end" textLength="16.60" lengthAdjust="spacingAndGlyphs" >10</text>
<rect x="204.50" y="465.60" width="19.76" height="16.6" fill="#000"/>
<rect x="205.00" y="467.00" width="17.26" height="13.8" fill="url(#gDE0)"/>
<text x="197.00" y="482.60" font-size="16.86" fill="#d8d8d8" stroke="#d8d8d8" stroke-width="0.34" text-anchor="end" textLength="8.30" lengthAdjust="spacingAndGlyphs" >0</text>
<line x1="204.00" y1="486.80" x2="204.00" y2="493.00" stroke="#dddddd" stroke-width="2" />
<text x="204.00" y="511.40" font-size="16.57" fill="#d8d8d8" stroke="#d8d8d8" stroke-width="0.33" text-anchor="middle" textLength="8.30" lengthAdjust="spacingAndGlyphs" >0</text>
<line x1="246.93" y1="486.80" x2="246.93" y2="493.00" stroke="#dddddd" stroke-width="2" />
<text x="246.93" y="511.40" font-size="16.57" fill="#d8d8d8" stroke="#d8d8d8" stroke-width="0.33" text-anchor="middle" textLength="8.30" lengthAdjust="spacingAndGlyphs" >2</text>
<line x1="289.87" y1="486.80" x2="289.87" y2="493.00" stroke="#dddddd" stroke-width="2" />
<text x="289.87" y="511.40" font-size="16.57" fill="#d8d8d8" stroke="#d8d8d8" stroke-width="0.33" text-anchor="middle" textLength="8.30" lengthAdjust="spacingAndGlyphs" >4</text>
<line x1="332.80" y1="486.80" x2="332.80" y2="493.00" stroke="#dddddd" stroke-width="2" />
<text x="332.80" y="511.40" font-size="16.57" fill="#d8d8d8" stroke="#d8d8d8" stroke-width="0.33" text-anchor="middle" textLength="8.30" lengthAdjust="spacingAndGlyphs" >6</text>
<line x1="375.73" y1="486.80" x2="375.73" y2="493.00" stroke="#dddddd" stroke-width="2" />
<text x="375.73" y="511.40" font-size="16.57" fill="#d8d8d8" stroke="#d8d8d8" stroke-width="0.33" text-anchor="middle" textLength="8.30" lengthAdjust="spacingAndGlyphs" >8</text>
<line x1="418.67" y1="486.80" x2="418.67" y2="493.00" stroke="#dddddd" stroke-width="2" />
<text x="418.67" y="511.40" font-size="16.57" fill="#d8d8d8" stroke="#d8d8d8" stroke-width="0.33" text-anchor="middle" textLength="16.60" lengthAdjust="spacingAndGlyphs" >10</text>
<line x1="461.60" y1="486.80" x2="461.60" y2="493.00" stroke="#dddddd" stroke-width="2" />
<text x="461.60" y="511.40" font-size="16.57" fill="#d8d8d8" stroke="#d8d8d8" stroke-width="0.33" text-anchor="middle" textLength="16.60" lengthAdjust="spacingAndGlyphs" >12</text>
<line x1="504.53" y1="486.80" x2="504.53" y2="493.00" stroke="#dddddd" stroke-width="2" />
<text x="504.53" y="511.40" font-size="16.57" fill="#d8d8d8" stroke="#d8d8d8" stroke-width="0.33" text-anchor="middle" textLength="16.60" lengthAdjust="spacingAndGlyphs" >14</text>
<text x="887.00" y="113.75" font-size="18.17" fill="#d8d8d8" stroke="#d8d8d8" stroke-width="0.36" text-anchor="middle" textLength="87.50" lengthAdjust="spacingAndGlyphs" >RGB Balance</text>
<rect x="597.00" y="120.00" width="608.00" height="367.00" fill="#232323" />
<line x1="597.00" y1="165.88" x2="1205.00" y2="165.88" stroke="#a0a0a0" stroke-width="1.6" />
<line x1="597.00" y1="211.75" x2="1205.00" y2="211.75" stroke="#a0a0a0" stroke-width="1.6" />
<line x1="597.00" y1="257.62" x2="1205.00" y2="257.62" stroke="#a0a0a0" stroke-width="1.6" />
<line x1="597.00" y1="303.50" x2="1205.00" y2="303.50" stroke="#a0a0a0" stroke-width="1.6" />
<line x1="597.00" y1="349.38" x2="1205.00" y2="349.38" stroke="#a0a0a0" stroke-width="1.6" />
<line x1="597.00" y1="395.25" x2="1205.00" y2="395.25" stroke="#a0a0a0" stroke-width="1.6" />
<line x1="597.00" y1="441.12" x2="1205.00" y2="441.12" stroke="#a0a0a0" stroke-width="1.6" />
<rect x="597" y="120" width="608" height="367" fill="none" stroke="#a0a0a0" stroke-width="2"/>
<line x1="590.50" y1="120.00" x2="597.00" y2="120.00" stroke="#dddddd" stroke-width="2" />
<text x="590.00" y="126.30" font-size="15.99" fill="#d8d8d8" stroke="#d8d8d8" stroke-width="0.32" text-anchor="end" textLength="16.40" lengthAdjust="spacingAndGlyphs" >40</text>
<line x1="590.50" y1="165.88" x2="597.00" y2="165.88" stroke="#dddddd" stroke-width="2" />
<text x="590.00" y="172.18" font-size="15.99" fill="#d8d8d8" stroke="#d8d8d8" stroke-width="0.32" text-anchor="end" textLength="16.40" lengthAdjust="spacingAndGlyphs" >30</text>
<line x1="590.50" y1="211.75" x2="597.00" y2="211.75" stroke="#dddddd" stroke-width="2" />
<text x="590.00" y="218.05" font-size="15.99" fill="#d8d8d8" stroke="#d8d8d8" stroke-width="0.32" text-anchor="end" textLength="16.40" lengthAdjust="spacingAndGlyphs" >20</text>
<line x1="590.50" y1="257.62" x2="597.00" y2="257.62" stroke="#dddddd" stroke-width="2" />
<text x="590.00" y="263.93" font-size="15.99" fill="#d8d8d8" stroke="#d8d8d8" stroke-width="0.32" text-anchor="end" textLength="16.40" lengthAdjust="spacingAndGlyphs" >10</text>
<line x1="590.50" y1="303.50" x2="597.00" y2="303.50" stroke="#dddddd" stroke-width="2" />
<text x="590.00" y="309.80" font-size="15.99" fill="#d8d8d8" stroke="#d8d8d8" stroke-width="0.32" text-anchor="end" textLength="8.20" lengthAdjust="spacingAndGlyphs" >0</text>
<line x1="590.50" y1="349.38" x2="597.00" y2="349.38" stroke="#dddddd" stroke-width="2" />
<text x="590.00" y="355.68" font-size="15.99" fill="#d8d8d8" stroke="#d8d8d8" stroke-width="0.32" text-anchor="end" textLength="21.40" lengthAdjust="spacingAndGlyphs" >-10</text>
<line x1="590.50" y1="395.25" x2="597.00" y2="395.25" stroke="#dddddd" stroke-width="2" />
<text x="590.00" y="401.55" font-size="15.99" fill="#d8d8d8" stroke="#d8d8d8" stroke-width="0.32" text-anchor="end" textLength="21.40" lengthAdjust="spacingAndGlyphs" >-20</text>
<line x1="590.50" y1="441.12" x2="597.00" y2="441.12" stroke="#dddddd" stroke-width="2" />
<text x="590.00" y="447.43" font-size="15.99" fill="#d8d8d8" stroke="#d8d8d8" stroke-width="0.32" text-anchor="end" textLength="21.40" lengthAdjust="spacingAndGlyphs" >-30</text>
<line x1="590.50" y1="487.00" x2="597.00" y2="487.00" stroke="#dddddd" stroke-width="2" />
<text x="590.00" y="493.30" font-size="15.99" fill="#d8d8d8" stroke="#d8d8d8" stroke-width="0.32" text-anchor="end" textLength="21.40" lengthAdjust="spacingAndGlyphs" >-40</text>
<line x1="597.00" y1="487.00" x2="597.00" y2="493.00" stroke="#dddddd" stroke-width="2" />
<text x="597.00" y="511.40" font-size="15.99" fill="#d8d8d8" stroke="#d8d8d8" stroke-width="0.32" text-anchor="middle" textLength="8.20" lengthAdjust="spacingAndGlyphs" >0</text>
<line x1="657.80" y1="487.00" x2="657.80" y2="493.00" stroke="#dddddd" stroke-width="2" />
<text x="657.80" y="511.40" font-size="15.99" fill="#d8d8d8" stroke="#d8d8d8" stroke-width="0.32" text-anchor="middle" textLength="16.40" lengthAdjust="spacingAndGlyphs" >10</text>
<line x1="718.60" y1="487.00" x2="718.60" y2="493.00" stroke="#dddddd" stroke-width="2" />
<text x="718.60" y="511.40" font-size="15.99" fill="#d8d8d8" stroke="#d8d8d8" stroke-width="0.32" text-anchor="middle" textLength="16.40" lengthAdjust="spacingAndGlyphs" >20</text>
<line x1="779.40" y1="487.00" x2="779.40" y2="493.00" stroke="#dddddd" stroke-width="2" />
<text x="779.40" y="511.40" font-size="15.99" fill="#d8d8d8" stroke="#d8d8d8" stroke-width="0.32" text-anchor="middle" textLength="16.40" lengthAdjust="spacingAndGlyphs" >30</text>
<line x1="840.20" y1="487.00" x2="840.20" y2="493.00" stroke="#dddddd" stroke-width="2" />
<text x="840.20" y="511.40" font-size="15.99" fill="#d8d8d8" stroke="#d8d8d8" stroke-width="0.32" text-anchor="middle" textLength="16.40" lengthAdjust="spacingAndGlyphs" >40</text>
<line x1="901.00" y1="487.00" x2="901.00" y2="493.00" stroke="#dddddd" stroke-width="2" />
<text x="901.00" y="511.40" font-size="15.99" fill="#d8d8d8" stroke="#d8d8d8" stroke-width="0.32" text-anchor="middle" textLength="16.40" lengthAdjust="spacingAndGlyphs" >50</text>
<line x1="961.80" y1="487.00" x2="961.80" y2="493.00" stroke="#dddddd" stroke-width="2" />
<text x="961.80" y="511.40" font-size="15.99" fill="#d8d8d8" stroke="#d8d8d8" stroke-width="0.32" text-anchor="middle" textLength="16.40" lengthAdjust="spacingAndGlyphs" >60</text>
<line x1="1022.60" y1="487.00" x2="1022.60" y2="493.00" stroke="#dddddd" stroke-width="2" />
<text x="1022.60" y="511.40" font-size="15.99" fill="#d8d8d8" stroke="#d8d8d8" stroke-width="0.32" text-anchor="middle" textLength="16.40" lengthAdjust="spacingAndGlyphs" >70</text>
<line x1="1083.40" y1="487.00" x2="1083.40" y2="493.00" stroke="#dddddd" stroke-width="2" />
<text x="1083.40" y="511.40" font-size="15.99" fill="#d8d8d8" stroke="#d8d8d8" stroke-width="0.32" text-anchor="middle" textLength="16.40" lengthAdjust="spacingAndGlyphs" >80</text>
<line x1="1144.20" y1="487.00" x2="1144.20" y2="493.00" stroke="#dddddd" stroke-width="2" />
<text x="1144.20" y="511.40" font-size="15.99" fill="#d8d8d8" stroke="#d8d8d8" stroke-width="0.32" text-anchor="middle" textLength="16.40" lengthAdjust="spacingAndGlyphs" >90</text>
<line x1="1205.00" y1="487.00" x2="1205.00" y2="493.00" stroke="#dddddd" stroke-width="2" />
<text x="1205.00" y="511.40" font-size="15.99" fill="#d8d8d8" stroke="#d8d8d8" stroke-width="0.32" text-anchor="middle" textLength="24.60" lengthAdjust="spacingAndGlyphs" >100</text>
<svg x="597" y="120" width="608" height="367" overflow="hidden"><g transform="translate(-597,-120)">
<polyline points="597.0,286.5 657.8,309.7 718.6,310.5 779.4,305.6 840.2,286.5 901.0,281.9 961.8,279.6 1022.6,276.9 1083.4,279.6 1144.2,284.7 1205.0,305.6" fill="none" stroke="#009000" stroke-width="3.2" stroke-linejoin="round"/>
<polyline points="597.0,283.8 657.8,304.4 718.6,303.2 779.4,296.7 840.2,275.0 901.0,269.1 961.8,264.0 1022.6,259.4 1083.4,260.1 1144.2,264.0 1205.0,286.0" fill="none" stroke="#ff0000" stroke-width="3.2" stroke-linejoin="round"/>
<polyline points="597.0,284.2 657.8,314.5 718.6,321.8 779.4,321.8 840.2,307.6 901.0,305.6 961.8,305.6 1022.6,303.6 1083.4,305.6 1144.2,306.0 1205.0,316.2" fill="none" stroke="#0000ff" stroke-width="3.2" stroke-linejoin="round"/>
</g></svg>
<text x="1323.50" y="113.75" font-size="18.17" fill="#d8d8d8" stroke="#d8d8d8" stroke-width="0.36" text-anchor="middle" textLength="87.50" lengthAdjust="spacingAndGlyphs" >RGB Balance</text>
<rect x="1260.00" y="120.50" width="147.00" height="373.00" fill="#232323" />
<line x1="1260.00" y1="167.12" x2="1407.00" y2="167.12" stroke="#a0a0a0" stroke-width="1.6" />
<line x1="1260.00" y1="213.75" x2="1407.00" y2="213.75" stroke="#a0a0a0" stroke-width="1.6" />
<line x1="1260.00" y1="260.38" x2="1407.00" y2="260.38" stroke="#a0a0a0" stroke-width="1.6" />
<line x1="1260.00" y1="307.00" x2="1407.00" y2="307.00" stroke="#a0a0a0" stroke-width="1.6" />
<line x1="1260.00" y1="353.62" x2="1407.00" y2="353.62" stroke="#a0a0a0" stroke-width="1.6" />
<line x1="1260.00" y1="400.25" x2="1407.00" y2="400.25" stroke="#a0a0a0" stroke-width="1.6" />
<line x1="1260.00" y1="446.88" x2="1407.00" y2="446.88" stroke="#a0a0a0" stroke-width="1.6" />
<rect x="1260" y="120.5" width="147" height="373.0" fill="none" stroke="#a0a0a0" stroke-width="2"/>
<line x1="1253.50" y1="120.50" x2="1260.00" y2="120.50" stroke="#dddddd" stroke-width="2" />
<text x="1253.00" y="126.80" font-size="15.99" fill="#d8d8d8" stroke="#d8d8d8" stroke-width="0.32" text-anchor="end" textLength="8.20" lengthAdjust="spacingAndGlyphs" >4</text>
<line x1="1253.50" y1="167.12" x2="1260.00" y2="167.12" stroke="#dddddd" stroke-width="2" />
<text x="1253.00" y="173.43" font-size="15.99" fill="#d8d8d8" stroke="#d8d8d8" stroke-width="0.32" text-anchor="end" textLength="8.20" lengthAdjust="spacingAndGlyphs" >3</text>
<line x1="1253.50" y1="213.75" x2="1260.00" y2="213.75" stroke="#dddddd" stroke-width="2" />
<text x="1253.00" y="220.05" font-size="15.99" fill="#d8d8d8" stroke="#d8d8d8" stroke-width="0.32" text-anchor="end" textLength="8.20" lengthAdjust="spacingAndGlyphs" >2</text>
<line x1="1253.50" y1="260.38" x2="1260.00" y2="260.38" stroke="#dddddd" stroke-width="2" />
<text x="1253.00" y="266.68" font-size="15.99" fill="#d8d8d8" stroke="#d8d8d8" stroke-width="0.32" text-anchor="end" textLength="8.20" lengthAdjust="spacingAndGlyphs" >1</text>
<line x1="1253.50" y1="307.00" x2="1260.00" y2="307.00" stroke="#dddddd" stroke-width="2" />
<text x="1253.00" y="313.30" font-size="15.99" fill="#d8d8d8" stroke="#d8d8d8" stroke-width="0.32" text-anchor="end" textLength="8.20" lengthAdjust="spacingAndGlyphs" >0</text>
<line x1="1253.50" y1="353.62" x2="1260.00" y2="353.62" stroke="#dddddd" stroke-width="2" />
<text x="1253.00" y="359.93" font-size="15.99" fill="#d8d8d8" stroke="#d8d8d8" stroke-width="0.32" text-anchor="end" textLength="13.20" lengthAdjust="spacingAndGlyphs" >-1</text>
<line x1="1253.50" y1="400.25" x2="1260.00" y2="400.25" stroke="#dddddd" stroke-width="2" />
<text x="1253.00" y="406.55" font-size="15.99" fill="#d8d8d8" stroke="#d8d8d8" stroke-width="0.32" text-anchor="end" textLength="13.20" lengthAdjust="spacingAndGlyphs" >-2</text>
<line x1="1253.50" y1="446.88" x2="1260.00" y2="446.88" stroke="#dddddd" stroke-width="2" />
<text x="1253.00" y="453.18" font-size="15.99" fill="#d8d8d8" stroke="#d8d8d8" stroke-width="0.32" text-anchor="end" textLength="13.20" lengthAdjust="spacingAndGlyphs" >-3</text>
<line x1="1253.50" y1="493.50" x2="1260.00" y2="493.50" stroke="#dddddd" stroke-width="2" />
<text x="1253.00" y="499.80" font-size="15.99" fill="#d8d8d8" stroke="#d8d8d8" stroke-width="0.32" text-anchor="end" textLength="13.20" lengthAdjust="spacingAndGlyphs" >-4</text>
<line x1="1260.00" y1="493.50" x2="1260.00" y2="501.00" stroke="#dddddd" stroke-width="2" />
<line x1="1407.00" y1="493.50" x2="1407.00" y2="501.00" stroke="#dddddd" stroke-width="2" />
<text x="1333.00" y="511.40" font-size="15.99" fill="#d8d8d8" stroke="#d8d8d8" stroke-width="0.32" text-anchor="middle" textLength="24.60" lengthAdjust="spacingAndGlyphs" >100</text>
<rect x="1274" y="136" width="38" height="170.5" fill="url(#gRed)" stroke="#000" stroke-width="1.5"/>
<rect x="1312.7" y="306.5" width="38.3" height="38.5" fill="url(#gGrn)" stroke="#000" stroke-width="1.5"/>
<rect x="1352" y="306.5" width="38" height="143.5" fill="url(#gBlu)" stroke="#000" stroke-width="1.5"/>
<text x="1666.50" y="113.40" font-size="17.44" fill="#d8d8d8" stroke="#d8d8d8" stroke-width="0.35" text-anchor="middle" textLength="115.30" lengthAdjust="spacingAndGlyphs" >Gamma Log/Log</text>
<rect x="1469.70" y="120.00" width="421.00" height="367.00" fill="#232323" />
<line x1="1469.70" y1="193.40" x2="1890.70" y2="193.40" stroke="#a0a0a0" stroke-width="1.6" />
<line x1="1469.70" y1="266.80" x2="1890.70" y2="266.80" stroke="#a0a0a0" stroke-width="1.6" />
<line x1="1469.70" y1="340.20" x2="1890.70" y2="340.20" stroke="#a0a0a0" stroke-width="1.6" />
<line x1="1469.70" y1="413.60" x2="1890.70" y2="413.60" stroke="#a0a0a0" stroke-width="1.6" />
<rect x="1469.7" y="120" width="421.0" height="367" fill="none" stroke="#a0a0a0" stroke-width="2"/>
<line x1="1463.00" y1="120.00" x2="1469.70" y2="120.00" stroke="#dddddd" stroke-width="2" />
<text x="1462.70" y="126.30" font-size="15.99" fill="#d8d8d8" stroke="#d8d8d8" stroke-width="0.32" text-anchor="end" textLength="21.20" lengthAdjust="spacingAndGlyphs" >2.8</text>
<line x1="1463.00" y1="193.40" x2="1469.70" y2="193.40" stroke="#dddddd" stroke-width="2" />
<text x="1462.70" y="199.70" font-size="15.99" fill="#d8d8d8" stroke="#d8d8d8" stroke-width="0.32" text-anchor="end" textLength="21.20" lengthAdjust="spacingAndGlyphs" >2.6</text>
<line x1="1463.00" y1="266.80" x2="1469.70" y2="266.80" stroke="#dddddd" stroke-width="2" />
<text x="1462.70" y="273.10" font-size="15.99" fill="#d8d8d8" stroke="#d8d8d8" stroke-width="0.32" text-anchor="end" textLength="21.20" lengthAdjust="spacingAndGlyphs" >2.4</text>
<line x1="1463.00" y1="340.20" x2="1469.70" y2="340.20" stroke="#dddddd" stroke-width="2" />
<text x="1462.70" y="346.50" font-size="15.99" fill="#d8d8d8" stroke="#d8d8d8" stroke-width="0.32" text-anchor="end" textLength="21.20" lengthAdjust="spacingAndGlyphs" >2.2</text>
<line x1="1463.00" y1="413.60" x2="1469.70" y2="413.60" stroke="#dddddd" stroke-width="2" />
<text x="1462.70" y="419.90" font-size="15.99" fill="#d8d8d8" stroke="#d8d8d8" stroke-width="0.32" text-anchor="end" textLength="8.20" lengthAdjust="spacingAndGlyphs" >2</text>
<line x1="1463.00" y1="487.00" x2="1469.70" y2="487.00" stroke="#dddddd" stroke-width="2" />
<text x="1462.70" y="493.30" font-size="15.99" fill="#d8d8d8" stroke="#d8d8d8" stroke-width="0.32" text-anchor="end" textLength="21.20" lengthAdjust="spacingAndGlyphs" >1.8</text>
<line x1="1469.70" y1="487.00" x2="1469.70" y2="493.00" stroke="#dddddd" stroke-width="2" />
<text x="1469.70" y="511.40" font-size="15.99" fill="#d8d8d8" stroke="#d8d8d8" stroke-width="0.32" text-anchor="middle" textLength="8.20" lengthAdjust="spacingAndGlyphs" >0</text>
<line x1="1553.90" y1="487.00" x2="1553.90" y2="493.00" stroke="#dddddd" stroke-width="2" />
<text x="1553.90" y="511.40" font-size="15.99" fill="#d8d8d8" stroke="#d8d8d8" stroke-width="0.32" text-anchor="middle" textLength="16.40" lengthAdjust="spacingAndGlyphs" >20</text>
<line x1="1638.10" y1="487.00" x2="1638.10" y2="493.00" stroke="#dddddd" stroke-width="2" />
<text x="1638.10" y="511.40" font-size="15.99" fill="#d8d8d8" stroke="#d8d8d8" stroke-width="0.32" text-anchor="middle" textLength="16.40" lengthAdjust="spacingAndGlyphs" >40</text>
<line x1="1722.30" y1="487.00" x2="1722.30" y2="493.00" stroke="#dddddd" stroke-width="2" />
<text x="1722.30" y="511.40" font-size="15.99" fill="#d8d8d8" stroke="#d8d8d8" stroke-width="0.32" text-anchor="middle" textLength="16.40" lengthAdjust="spacingAndGlyphs" >60</text>
<line x1="1806.50" y1="487.00" x2="1806.50" y2="493.00" stroke="#dddddd" stroke-width="2" />
<text x="1806.50" y="511.40" font-size="15.99" fill="#d8d8d8" stroke="#d8d8d8" stroke-width="0.32" text-anchor="middle" textLength="16.40" lengthAdjust="spacingAndGlyphs" >80</text>
<line x1="1890.70" y1="487.00" x2="1890.70" y2="493.00" stroke="#dddddd" stroke-width="2" />
<text x="1890.70" y="511.40" font-size="15.99" fill="#d8d8d8" stroke="#d8d8d8" stroke-width="0.32" text-anchor="middle" textLength="24.60" lengthAdjust="spacingAndGlyphs" >100</text>
<svg x="1469.7" y="120" width="421.0" height="367" overflow="hidden"><g transform="translate(-1469.7,-120)">
<polyline points="1469.7,678.6 1511.8,403.0 1553.9,360.5 1596.0,348.1 1638.1,364.2 1680.2,366.5 1722.3,372.9 1764.4,389.5 1806.5,409.9 1848.6,463.9 1890.7,312.7" fill="none" stroke="#8a8a8a" stroke-width="3" stroke-linejoin="round"/>
<path d="M1484.86,491.37 L1485.70,486.38 L1486.54,481.71 L1487.38,477.34 L1488.22,473.23 L1489.07,469.36 L1489.91,465.70 L1490.75,462.23 L1491.59,458.94 L1492.43,455.81 L1493.28,452.82 L1494.12,449.98 L1494.96,447.26 L1495.80,444.65 L1496.64,442.16 L1497.49,439.76 L1498.33,437.46 L1499.17,435.25 L1500.01,433.12 L1500.85,431.06 L1501.70,429.08 L1502.54,427.17 L1503.38,425.32 L1504.22,423.53 L1505.06,421.80 L1505.91,420.12 L1506.75,418.50 L1507.59,416.92 L1508.43,415.39 L1509.27,413.90 L1510.12,412.46 L1513.48,407.06 L1516.85,402.20 L1520.22,397.80 L1523.59,393.77 L1526.96,390.08 L1530.32,386.67 L1533.69,383.52 L1537.06,380.59 L1540.43,377.86 L1543.80,375.30 L1547.16,372.91 L1550.53,370.65 L1553.90,368.53 L1557.27,366.52 L1560.64,364.62 L1564.00,362.82 L1567.37,361.11 L1570.74,359.48 L1574.11,357.92 L1577.48,356.44 L1580.84,355.03 L1584.21,353.68 L1587.58,352.38 L1590.95,351.14 L1594.32,349.94 L1597.68,348.80 L1601.05,347.69 L1604.42,346.63 L1607.79,345.61 L1611.16,344.62 L1614.52,343.67 L1617.89,342.75 L1621.26,341.87 L1624.63,341.01 L1628.00,340.18 L1631.36,339.37 L1634.73,338.60 L1638.10,337.84 L1641.47,337.11 L1644.84,336.40 L1648.20,335.71 L1651.57,335.04 L1654.94,334.39 L1658.31,333.76 L1661.68,333.14 L1665.04,332.55 L1668.41,331.96 L1671.78,331.40 L1675.15,330.85 L1678.52,330.31 L1681.88,329.78 L1685.25,329.27 L1688.62,328.77 L1691.99,328.29 L1695.36,327.81 L1698.72,327.35 L1702.09,326.90 L1705.46,326.45 L1708.83,326.02 L1712.20,325.60 L1715.56,325.19 L1718.93,324.78 L1722.30,324.39 L1725.67,324.00 L1729.04,323.62 L1732.40,323.25 L1735.77,322.89 L1739.14,322.54 L1742.51,322.19 L1745.88,321.85 L1749.24,321.51 L1752.61,321.19 L1755.98,320.87 L1759.35,320.55 L1762.72,320.25 L1766.08,319.94 L1769.45,319.65 L1772.82,319.36 L1776.19,319.07 L1779.56,318.79 L1782.92,318.52 L1786.29,318.25 L1789.66,317.98 L1793.03,317.72 L1796.40,317.47 L1799.76,317.22 L1803.13,316.97 L1806.50,316.73 L1809.87,316.49 L1813.24,316.26 L1816.60,316.03 L1819.97,315.80 L1823.34,315.58 L1826.71,315.36 L1830.08,315.15 L1833.44,314.94 L1836.81,314.73 L1840.18,314.52 L1843.55,314.32 L1846.92,314.13 L1850.28,313.93 L1853.65,313.74 L1857.02,313.55 L1860.39,313.37 L1863.76,313.18 L1867.12,313.00 L1870.49,312.83 L1873.86,312.65 L1877.23,312.48 L1880.60,312.31 L1883.96,312.15 L1887.33,311.98 L1890.70,311.82 L1892.81,311.72" fill="none" stroke="#ffff00" stroke-width="3.2" stroke-linejoin="round"/>
</g></svg>
<text x="241.30" y="560.90" font-size="36.92" fill="#f4f4f4" stroke="#f4f4f4" stroke-width="0.74" textLength="229.50" lengthAdjust="spacingAndGlyphs" >Avg dE2000: 2.4</text>
<text x="677.50" y="560.90" font-size="36.92" fill="#f4f4f4" stroke="#f4f4f4" stroke-width="0.74" textLength="201.50" lengthAdjust="spacingAndGlyphs" >Avg CCT: 6117</text>
<text x="1084.80" y="560.90" font-size="36.92" fill="#f4f4f4" stroke="#f4f4f4" stroke-width="0.74" textLength="273.60" lengthAdjust="spacingAndGlyphs" >Contrast Ratio: 662</text>
<text x="1499.80" y="560.90" font-size="36.92" fill="#f4f4f4" stroke="#f4f4f4" stroke-width="0.74" textLength="333.90" lengthAdjust="spacingAndGlyphs" >Average Gamma: 2.074</text>
<rect x="150.00" y="583.00" width="1770.00" height="151.20" fill="#000000" />
<line x1="251.50" y1="583.00" x2="251.50" y2="734.00" stroke="#0c0c0c" stroke-width="1" />
<text transform="translate(267.2,616) rotate(-90)" font-size="14.6" fill="#f0f0f0" stroke="#f0f0f0" stroke-width="0.2" text-anchor="middle" textLength="40.5" lengthAdjust="spacingAndGlyphs">Actual</text>
<text transform="translate(267.2,682.1) rotate(-90)" font-size="14.6" fill="#f0f0f0" stroke="#f0f0f0" stroke-width="0.2" text-anchor="middle" textLength="39.5" lengthAdjust="spacingAndGlyphs">Target</text>
<rect x="275.50" y="590.00" width="128.00" height="118.00" fill="#f2f2f2" />
<rect x="277.00" y="591.50" width="125.00" height="57.50" fill="#0a0a0a" />
<rect x="277.00" y="649.00" width="125.00" height="57.50" fill="#000000" />
<text x="339.50" y="724.80" font-size="13.37" fill="#f0f0f0" stroke="#f0f0f0" stroke-width="0.27" text-anchor="middle" textLength="7.00" lengthAdjust="spacingAndGlyphs" >0</text>
<rect x="424.45" y="590.00" width="128.00" height="118.00" fill="#f2f2f2" />
<rect x="425.95" y="591.50" width="125.00" height="57.50" fill="#1c1b19" />
<rect x="425.95" y="649.00" width="125.00" height="57.50" fill="#1c1c1c" />
<text x="488.45" y="724.80" font-size="13.37" fill="#f0f0f0" stroke="#f0f0f0" stroke-width="0.27" text-anchor="middle" textLength="14.00" lengthAdjust="spacingAndGlyphs" >10</text>
<rect x="573.40" y="590.00" width="128.00" height="118.00" fill="#f2f2f2" />
<rect x="574.90" y="591.50" width="125.00" height="57.50" fill="#33312f" />
<rect x="574.90" y="649.00" width="125.00" height="57.50" fill="#333333" />
<text x="637.40" y="724.80" font-size="13.37" fill="#f0f0f0" stroke="#f0f0f0" stroke-width="0.27" text-anchor="middle" textLength="14.00" lengthAdjust="spacingAndGlyphs" >20</text>
<rect x="722.35" y="590.00" width="128.00" height="118.00" fill="#f2f2f2" />
<rect x="723.85" y="591.50" width="125.00" height="57.50" fill="#4d4b48" />
<rect x="723.85" y="649.00" width="125.00" height="57.50" fill="#4d4d4d" />
<text x="786.35" y="724.80" font-size="13.37" fill="#f0f0f0" stroke="#f0f0f0" stroke-width="0.27" text-anchor="middle" textLength="14.00" lengthAdjust="spacingAndGlyphs" >30</text>
<rect x="871.30" y="590.00" width="128.00" height="118.00" fill="#f2f2f2" />
<rect x="872.80" y="591.50" width="125.00" height="57.50" fill="#6b6965" />
<rect x="872.80" y="649.00" width="125.00" height="57.50" fill="#666666" />
<text x="935.30" y="724.80" font-size="13.37" fill="#f0f0f0" stroke="#f0f0f0" stroke-width="0.27" text-anchor="middle" textLength="14.00" lengthAdjust="spacingAndGlyphs" >40</text>
<rect x="1020.25" y="590.00" width="128.00" height="118.00" fill="#f2f2f2" />
<rect x="1021.75" y="591.50" width="125.00" height="57.50" fill="#878480" />
<rect x="1021.75" y="649.00" width="125.00" height="57.50" fill="#808080" />
<text x="1084.25" y="724.80" font-size="13.37" fill="#f0f0f0" stroke="#f0f0f0" stroke-width="0.27" text-anchor="middle" textLength="14.00" lengthAdjust="spacingAndGlyphs" >50</text>
<rect x="1169.20" y="590.00" width="128.00" height="118.00" fill="#f2f2f2" />
<rect x="1170.70" y="591.50" width="125.00" height="57.50" fill="#a29e9a" />
<rect x="1170.70" y="649.00" width="125.00" height="57.50" fill="#999999" />
<text x="1233.20" y="724.80" font-size="13.37" fill="#f0f0f0" stroke="#f0f0f0" stroke-width="0.27" text-anchor="middle" textLength="14.00" lengthAdjust="spacingAndGlyphs" >60</text>
<rect x="1318.15" y="590.00" width="128.00" height="118.00" fill="#f2f2f2" />
<rect x="1319.65" y="591.50" width="125.00" height="57.50" fill="#bcb8b3" />
<rect x="1319.65" y="649.00" width="125.00" height="57.50" fill="#b3b3b3" />
<text x="1382.15" y="724.80" font-size="13.37" fill="#f0f0f0" stroke="#f0f0f0" stroke-width="0.27" text-anchor="middle" textLength="14.00" lengthAdjust="spacingAndGlyphs" >70</text>
<rect x="1467.10" y="590.00" width="128.00" height="118.00" fill="#f2f2f2" />
<rect x="1468.60" y="591.50" width="125.00" height="57.50" fill="#d7d3cc" />
<rect x="1468.60" y="649.00" width="125.00" height="57.50" fill="#cccccc" />
<text x="1531.10" y="724.80" font-size="13.37" fill="#f0f0f0" stroke="#f0f0f0" stroke-width="0.27" text-anchor="middle" textLength="14.00" lengthAdjust="spacingAndGlyphs" >80</text>
<rect x="1616.05" y="590.00" width="128.00" height="118.00" fill="#f2f2f2" />
<rect x="1617.55" y="591.50" width="125.00" height="57.50" fill="#ede9e4" />
<rect x="1617.55" y="649.00" width="125.00" height="57.50" fill="#e6e6e6" />
<text x="1680.05" y="724.80" font-size="13.37" fill="#f0f0f0" stroke="#f0f0f0" stroke-width="0.27" text-anchor="middle" textLength="14.00" lengthAdjust="spacingAndGlyphs" >90</text>
<rect x="1765.00" y="590.00" width="128.00" height="118.00" fill="#f2f2f2" />
<rect x="1766.50" y="591.50" width="125.00" height="57.50" fill="#fffbf7" />
<rect x="1766.50" y="649.00" width="125.00" height="57.50" fill="#f9f9f9" />
<text x="1829.00" y="724.80" font-size="13.37" fill="#f0f0f0" stroke="#f0f0f0" stroke-width="0.27" text-anchor="middle" textLength="21.00" lengthAdjust="spacingAndGlyphs" >100</text>
<text x="173.50" y="811.70" font-size="33.72" fill="#f4f4f4" stroke="#f4f4f4" stroke-width="0.67" textLength="231.00" lengthAdjust="spacingAndGlyphs" >Current Reading</text>
<text x="173.00" y="861.30" font-size="28.49" fill="#f4f4f4" stroke="#f4f4f4" stroke-width="0.57" textLength="107.50" lengthAdjust="spacingAndGlyphs" >x: 0.3167</text>
<text x="331.70" y="861.30" font-size="28.49" fill="#f4f4f4" stroke="#f4f4f4" stroke-width="0.57" textLength="108.70" lengthAdjust="spacingAndGlyphs" >y: 0.3311</text>
<text x="173.00" y="900.00" font-size="28.49" fill="#f4f4f4" stroke="#f4f4f4" stroke-width="0.57" textLength="117.40" lengthAdjust="spacingAndGlyphs" >u': 0.1998</text>
<text x="331.70" y="900.00" font-size="28.49" fill="#f4f4f4" stroke="#f4f4f4" stroke-width="0.57" textLength="84.80" lengthAdjust="spacingAndGlyphs" >v': 0.47</text>
<text x="173.00" y="939.10" font-size="28.49" fill="#f4f4f4" stroke="#f4f4f4" stroke-width="0.57" textLength="183.70" lengthAdjust="spacingAndGlyphs" >cd/m²: 286.249</text>
<text x="173.00" y="978.70" font-size="28.49" fill="#f4f4f4" stroke="#f4f4f4" stroke-width="0.57" textLength="148.00" lengthAdjust="spacingAndGlyphs" >ΔE 2000: 2.1</text>
<text x="652.20" y="772.50" font-size="16.42" fill="#d8d8d8" stroke="#d8d8d8" stroke-width="0.33" text-anchor="middle" textLength="79.60" lengthAdjust="spacingAndGlyphs" >CIE 1931 xy</text>
<rect x="536.00" y="778.00" width="269.00" height="8.00" fill="url(#gCie0)" shape-rendering="crispEdges"/>
<rect x="536.00" y="786.00" width="269.00" height="8.00" fill="url(#gCie1)" shape-rendering="crispEdges"/>
<rect x="536.00" y="794.00" width="269.00" height="8.00" fill="url(#gCie2)" shape-rendering="crispEdges"/>
<rect x="536.00" y="802.00" width="269.00" height="8.00" fill="url(#gCie3)" shape-rendering="crispEdges"/>
<rect x="536.00" y="810.00" width="269.00" height="8.00" fill="url(#gCie4)" shape-rendering="crispEdges"/>
<rect x="536.00" y="818.00" width="269.00" height="8.00" fill="url(#gCie5)" shape-rendering="crispEdges"/>
<rect x="536.00" y="826.00" width="269.00" height="8.00" fill="url(#gCie6)" shape-rendering="crispEdges"/>
<rect x="536.00" y="834.00" width="269.00" height="8.00" fill="url(#gCie7)" shape-rendering="crispEdges"/>
<rect x="536.00" y="842.00" width="269.00" height="8.00" fill="url(#gCie8)" shape-rendering="crispEdges"/>
<rect x="536.00" y="850.00" width="269.00" height="8.00" fill="url(#gCie9)" shape-rendering="crispEdges"/>
<rect x="536.00" y="858.00" width="269.00" height="8.00" fill="url(#gCie10)" shape-rendering="crispEdges"/>
<rect x="536.00" y="866.00" width="269.00" height="8.00" fill="url(#gCie11)" shape-rendering="crispEdges"/>
<rect x="536.00" y="874.00" width="269.00" height="8.00" fill="url(#gCie12)" shape-rendering="crispEdges"/>
<rect x="536.00" y="882.00" width="269.00" height="8.00" fill="url(#gCie13)" shape-rendering="crispEdges"/>
<rect x="536.00" y="890.00" width="269.00" height="8.00" fill="url(#gCie14)" shape-rendering="crispEdges"/>
<rect x="536.00" y="898.00" width="269.00" height="8.00" fill="url(#gCie15)" shape-rendering="crispEdges"/>
<rect x="536.00" y="906.00" width="269.00" height="8.00" fill="url(#gCie16)" shape-rendering="crispEdges"/>
<rect x="536.00" y="914.00" width="269.00" height="8.00" fill="url(#gCie17)" shape-rendering="crispEdges"/>
<rect x="536.00" y="922.00" width="269.00" height="8.00" fill="url(#gCie18)" shape-rendering="crispEdges"/>
<rect x="536.00" y="930.00" width="269.00" height="8.00" fill="url(#gCie19)" shape-rendering="crispEdges"/>
<rect x="536.00" y="938.00" width="269.00" height="8.00" fill="url(#gCie20)" shape-rendering="crispEdges"/>
<rect x="536.00" y="946.00" width="269.00" height="8.00" fill="url(#gCie21)" shape-rendering="crispEdges"/>
<rect x="536.00" y="954.00" width="269.00" height="8.00" fill="url(#gCie22)" shape-rendering="crispEdges"/>
<rect x="536.00" y="962.00" width="269.00" height="8.00" fill="url(#gCie23)" shape-rendering="crispEdges"/>
<rect x="536.6" y="778.8" width="267.9" height="190.9000000000001" fill="none" stroke="#a8a8a8" stroke-width="2"/>
<svg x="536.6" y="778.8" width="267.9" height="190.9000000000001" overflow="hidden"><g transform="translate(-536.6,-778.8)">
<path d="M570 970 Q682.5 883.5 804 810.5" fill="none" stroke="#000" stroke-width="3"/>
</g></svg>
<rect x="663.2" y="865.3" width="14" height="15" fill="#fff" stroke="#000" stroke-width="2"/>
<circle cx="665.8" cy="923.4" r="5.3" fill="#000"/>
<circle cx="701.3" cy="856.4" r="4.6" fill="rgb(26,26,26)" stroke="#000" stroke-width="1.4"/>
<circle cx="708.7" cy="845.3" r="4.6" fill="rgb(51,51,51)" stroke="#000" stroke-width="1.4"/>
<circle cx="710.3" cy="843.4" r="4.6" fill="rgb(76,76,76)" stroke="#000" stroke-width="1.4"/>
<circle cx="710.9" cy="842.7" r="4.6" fill="rgb(102,102,102)" stroke="#000" stroke-width="1.4"/>
<circle cx="709.8" cy="843.8" r="4.6" fill="rgb(128,128,128)" stroke="#000" stroke-width="1.4"/>
<circle cx="709.3" cy="845.0" r="4.6" fill="rgb(153,153,153)" stroke="#000" stroke-width="1.4"/>
<circle cx="707.7" cy="846.9" r="4.6" fill="rgb(178,178,178)" stroke="#000" stroke-width="1.4"/>
<circle cx="705.0" cy="849.9" r="4.6" fill="rgb(204,204,204)" stroke="#000" stroke-width="1.4"/>
<circle cx="699.7" cy="855.6" r="4.6" fill="rgb(230,230,230)" stroke="#000" stroke-width="1.4"/>
<circle cx="690.6" cy="865.2" r="4.6" fill="rgb(255,255,255)" stroke="#000" stroke-width="1.4"/>
<line x1="549.00" y1="970.00" x2="549.00" y2="977.00" stroke="#dddddd" stroke-width="2" />
<text x="549.00" y="995.50" font-size="16.42" fill="#d8d8d8" stroke="#d8d8d8" stroke-width="0.33" text-anchor="middle" textLength="31.00" lengthAdjust="spacingAndGlyphs" >0.29</text>
<line x1="602.45" y1="970.00" x2="602.45" y2="977.00" stroke="#dddddd" stroke-width="2" />
<text x="602.45" y="995.50" font-size="16.42" fill="#d8d8d8" stroke="#d8d8d8" stroke-width="0.33" text-anchor="middle" textLength="20.00" lengthAdjust="spacingAndGlyphs" >0.3</text>
<line x1="655.90" y1="970.00" x2="655.90" y2="977.00" stroke="#dddddd" stroke-width="2" />
<text x="655.90" y="995.50" font-size="16.42" fill="#d8d8d8" stroke="#d8d8d8" stroke-width="0.33" text-anchor="middle" textLength="31.00" lengthAdjust="spacingAndGlyphs" >0.31</text>
<line x1="709.35" y1="970.00" x2="709.35" y2="977.00" stroke="#dddddd" stroke-width="2" />
<text x="709.35" y="995.50" font-size="16.42" fill="#d8d8d8" stroke="#d8d8d8" stroke-width="0.33" text-anchor="middle" textLength="31.00" lengthAdjust="spacingAndGlyphs" >0.32</text>
<line x1="762.80" y1="970.00" x2="762.80" y2="977.00" stroke="#dddddd" stroke-width="2" />
<text x="762.80" y="995.50" font-size="16.42" fill="#d8d8d8" stroke="#d8d8d8" stroke-width="0.33" text-anchor="middle" textLength="31.00" lengthAdjust="spacingAndGlyphs" >0.33</text>
<line x1="530.00" y1="833.90" x2="536.60" y2="833.90" stroke="#dddddd" stroke-width="2" />
<text x="529.80" y="839.50" font-size="16.42" fill="#d8d8d8" stroke="#d8d8d8" stroke-width="0.33" text-anchor="end" textLength="31.00" lengthAdjust="spacingAndGlyphs" >0.34</text>
<line x1="530.00" y1="910.30" x2="536.60" y2="910.30" stroke="#dddddd" stroke-width="2" />
<text x="529.80" y="915.90" font-size="16.42" fill="#d8d8d8" stroke="#d8d8d8" stroke-width="0.33" text-anchor="end" textLength="31.00" lengthAdjust="spacingAndGlyphs" >0.32</text>
<rect x="815.90" y="745.10" width="901.40" height="28.70" fill="#161616" />
<rect x="827.00" y="745.10" width="890.30" height="13.50" fill="#2e2e2e" />
<rect x="815.90" y="745.10" width="11.10" height="28.70" fill="#000" />
<text x="941.60" y="764.40" font-size="14.83" fill="#f0f0f0" stroke="#f0f0f0" stroke-width="0.30" textLength="7.20" lengthAdjust="spacingAndGlyphs" >0</text>
<text x="1012.40" y="764.40" font-size="14.83" fill="#f0f0f0" stroke="#f0f0f0" stroke-width="0.30" textLength="14.40" lengthAdjust="spacingAndGlyphs" >10</text>
<text x="1083.20" y="764.40" font-size="14.83" fill="#f0f0f0" stroke="#f0f0f0" stroke-width="0.30" textLength="14.40" lengthAdjust="spacingAndGlyphs" >20</text>
<text x="1154.00" y="764.40" font-size="14.83" fill="#f0f0f0" stroke="#f0f0f0" stroke-width="0.30" textLength="14.40" lengthAdjust="spacingAndGlyphs" >30</text>
<text x="1224.80" y="764.40" font-size="14.83" fill="#f0f0f0" stroke="#f0f0f0" stroke-width="0.30" textLength="14.40" lengthAdjust="spacingAndGlyphs" >40</text>
<text x="1295.60" y="764.40" font-size="14.83" fill="#f0f0f0" stroke="#f0f0f0" stroke-width="0.30" textLength="14.40" lengthAdjust="spacingAndGlyphs" >50</text>
<text x="1366.40" y="764.40" font-size="14.83" fill="#f0f0f0" stroke="#f0f0f0" stroke-width="0.30" textLength="14.40" lengthAdjust="spacingAndGlyphs" >60</text>
<text x="1437.20" y="764.40" font-size="14.83" fill="#f0f0f0" stroke="#f0f0f0" stroke-width="0.30" textLength="14.40" lengthAdjust="spacingAndGlyphs" >70</text>
<text x="1508.00" y="764.40" font-size="14.83" fill="#f0f0f0" stroke="#f0f0f0" stroke-width="0.30" textLength="14.40" lengthAdjust="spacingAndGlyphs" >80</text>
<text x="1578.80" y="764.40" font-size="14.83" fill="#f0f0f0" stroke="#f0f0f0" stroke-width="0.30" textLength="14.40" lengthAdjust="spacingAndGlyphs" >90</text>
<text x="1649.60" y="764.40" font-size="14.83" fill="#f0f0f0" stroke="#f0f0f0" stroke-width="0.30" textLength="21.60" lengthAdjust="spacingAndGlyphs" >100</text>
<rect x="827.00" y="773.80" width="890.30" height="27.14" fill="#404040" />
<rect x="815.90" y="773.80" width="11.10" height="27.14" fill="#2a2a2a" />
<text x="831.00" y="794.50" font-size="15.70" fill="#f0f0f0" stroke="#f0f0f0" stroke-width="0.31" textLength="47.00" lengthAdjust="spacingAndGlyphs" >x: CIE31</text>
<text x="941.60" y="794.50" font-size="15.70" fill="#f0f0f0" stroke="#f0f0f0" stroke-width="0.31" textLength="40.00" lengthAdjust="spacingAndGlyphs" >0.3119</text>
<text x="1012.40" y="794.50" font-size="15.70" fill="#f0f0f0" stroke="#f0f0f0" stroke-width="0.31" textLength="40.00" lengthAdjust="spacingAndGlyphs" >0.3187</text>
<text x="1083.20" y="794.50" font-size="15.70" fill="#f0f0f0" stroke="#f0f0f0" stroke-width="0.31" textLength="40.00" lengthAdjust="spacingAndGlyphs" >0.3201</text>
<text x="1154.00" y="794.50" font-size="15.70" fill="#f0f0f0" stroke="#f0f0f0" stroke-width="0.31" textLength="40.00" lengthAdjust="spacingAndGlyphs" >0.3204</text>
<text x="1224.80" y="794.50" font-size="15.70" fill="#f0f0f0" stroke="#f0f0f0" stroke-width="0.31" textLength="40.00" lengthAdjust="spacingAndGlyphs" >0.3205</text>
<text x="1295.60" y="794.50" font-size="15.70" fill="#f0f0f0" stroke="#f0f0f0" stroke-width="0.31" textLength="40.00" lengthAdjust="spacingAndGlyphs" >0.3203</text>
<text x="1366.40" y="794.50" font-size="15.70" fill="#f0f0f0" stroke="#f0f0f0" stroke-width="0.31" textLength="40.00" lengthAdjust="spacingAndGlyphs" >0.3202</text>
<text x="1437.20" y="794.50" font-size="15.70" fill="#f0f0f0" stroke="#f0f0f0" stroke-width="0.31" textLength="40.00" lengthAdjust="spacingAndGlyphs" >0.3199</text>
<text x="1508.00" y="794.50" font-size="15.70" fill="#f0f0f0" stroke="#f0f0f0" stroke-width="0.31" textLength="40.00" lengthAdjust="spacingAndGlyphs" >0.3194</text>
<text x="1578.80" y="794.50" font-size="15.70" fill="#f0f0f0" stroke="#f0f0f0" stroke-width="0.31" textLength="40.00" lengthAdjust="spacingAndGlyphs" >0.3184</text>
<text x="1649.60" y="794.50" font-size="15.70" fill="#f0f0f0" stroke="#f0f0f0" stroke-width="0.31" textLength="40.00" lengthAdjust="spacingAndGlyphs" >0.3167</text>
<rect x="827.00" y="800.74" width="890.30" height="27.14" fill="#7f7f7f" />
<rect x="815.90" y="800.74" width="11.10" height="27.14" fill="#202020" />
<text x="831.00" y="821.44" font-size="15.70" fill="#f0f0f0" stroke="#f0f0f0" stroke-width="0.31" textLength="47.00" lengthAdjust="spacingAndGlyphs" >y: CIE31</text>
<text x="941.60" y="821.44" font-size="15.70" fill="#f0f0f0" stroke="#f0f0f0" stroke-width="0.31" textLength="40.00" lengthAdjust="spacingAndGlyphs" >0.3161</text>
<text x="1012.40" y="821.44" font-size="15.70" fill="#f0f0f0" stroke="#f0f0f0" stroke-width="0.31" textLength="40.00" lengthAdjust="spacingAndGlyphs" >0.3334</text>
<text x="1083.20" y="821.44" font-size="15.70" fill="#f0f0f0" stroke="#f0f0f0" stroke-width="0.31" textLength="40.00" lengthAdjust="spacingAndGlyphs" >0.3363</text>
<text x="1154.00" y="821.44" font-size="15.70" fill="#f0f0f0" stroke="#f0f0f0" stroke-width="0.31" textLength="40.00" lengthAdjust="spacingAndGlyphs" >0.3368</text>
<text x="1224.80" y="821.44" font-size="15.70" fill="#f0f0f0" stroke="#f0f0f0" stroke-width="0.31" textLength="40.00" lengthAdjust="spacingAndGlyphs" >0.3370</text>
<text x="1295.60" y="821.44" font-size="15.70" fill="#f0f0f0" stroke="#f0f0f0" stroke-width="0.31" textLength="40.00" lengthAdjust="spacingAndGlyphs" >0.3367</text>
<text x="1366.40" y="821.44" font-size="15.70" fill="#f0f0f0" stroke="#f0f0f0" stroke-width="0.31" textLength="40.00" lengthAdjust="spacingAndGlyphs" >0.3364</text>
<text x="1437.20" y="821.44" font-size="15.70" fill="#f0f0f0" stroke="#f0f0f0" stroke-width="0.31" textLength="40.00" lengthAdjust="spacingAndGlyphs" >0.3359</text>
<text x="1508.00" y="821.44" font-size="15.70" fill="#f0f0f0" stroke="#f0f0f0" stroke-width="0.31" textLength="40.00" lengthAdjust="spacingAndGlyphs" >0.3351</text>
<text x="1578.80" y="821.44" font-size="15.70" fill="#f0f0f0" stroke="#f0f0f0" stroke-width="0.31" textLength="40.00" lengthAdjust="spacingAndGlyphs" >0.3336</text>
<text x="1649.60" y="821.44" font-size="15.70" fill="#f0f0f0" stroke="#f0f0f0" stroke-width="0.31" textLength="40.00" lengthAdjust="spacingAndGlyphs" >0.3311</text>
<rect x="827.00" y="827.68" width="890.30" height="27.14" fill="#404040" />
<rect x="815.90" y="827.68" width="11.10" height="27.14" fill="#2a2a2a" />
<text x="831.00" y="848.38" font-size="15.70" fill="#f0f0f0" stroke="#f0f0f0" stroke-width="0.31" textLength="7.50" lengthAdjust="spacingAndGlyphs" >Y</text>
<text x="941.60" y="848.38" font-size="15.70" fill="#f0f0f0" stroke="#f0f0f0" stroke-width="0.31" textLength="40.00" lengthAdjust="spacingAndGlyphs" >0.4326</text>
<text x="1012.40" y="848.38" font-size="15.70" fill="#f0f0f0" stroke="#f0f0f0" stroke-width="0.31" textLength="40.00" lengthAdjust="spacingAndGlyphs" >2.7859</text>
<text x="1083.20" y="848.38" font-size="15.70" fill="#f0f0f0" stroke="#f0f0f0" stroke-width="0.31" textLength="40.00" lengthAdjust="spacingAndGlyphs" >9.0698</text>
<text x="1154.00" y="848.38" font-size="15.70" fill="#f0f0f0" stroke="#f0f0f0" stroke-width="0.31" textLength="47.40" lengthAdjust="spacingAndGlyphs" >20.4829</text>
<text x="1224.80" y="848.38" font-size="15.70" fill="#f0f0f0" stroke="#f0f0f0" stroke-width="0.31" textLength="47.40" lengthAdjust="spacingAndGlyphs" >40.4868</text>
<text x="1295.60" y="848.38" font-size="15.70" fill="#f0f0f0" stroke="#f0f0f0" stroke-width="0.31" textLength="47.40" lengthAdjust="spacingAndGlyphs" >66.0216</text>
<text x="1366.40" y="848.38" font-size="15.70" fill="#f0f0f0" stroke="#f0f0f0" stroke-width="0.31" textLength="47.40" lengthAdjust="spacingAndGlyphs" >97.3765</text>
<rect x="1433.80" y="828.18" width="69.90" height="25.40" fill="#f4f4f4" />
<text x="1437.20" y="848.38" font-size="15.70" fill="#000" stroke="#000" stroke-width="0.05" textLength="54.80" lengthAdjust="spacingAndGlyphs" >136.2256</text>
<text x="1508.00" y="848.38" font-size="15.70" fill="#f0f0f0" stroke="#f0f0f0" stroke-width="0.31" textLength="54.80" lengthAdjust="spacingAndGlyphs" >182.7817</text>
<text x="1578.80" y="848.38" font-size="15.70" fill="#f0f0f0" stroke="#f0f0f0" stroke-width="0.31" textLength="54.80" lengthAdjust="spacingAndGlyphs" >236.1886</text>
<text x="1649.60" y="848.38" font-size="15.70" fill="#f0f0f0" stroke="#f0f0f0" stroke-width="0.31" textLength="54.80" lengthAdjust="spacingAndGlyphs" >286.2490</text>
<rect x="827.00" y="854.62" width="890.30" height="27.14" fill="#7f7f7f" />
<rect x="815.90" y="854.62" width="11.10" height="27.14" fill="#202020" />
<text x="831.00" y="875.32" font-size="15.70" fill="#f0f0f0" stroke="#f0f0f0" stroke-width="0.31" textLength="49.50" lengthAdjust="spacingAndGlyphs" >Target Y</text>
<text x="941.60" y="875.32" font-size="15.70" fill="#f0f0f0" stroke="#f0f0f0" stroke-width="0.31" textLength="40.00" lengthAdjust="spacingAndGlyphs" >0.0000</text>
<text x="1012.40" y="875.32" font-size="15.70" fill="#f0f0f0" stroke="#f0f0f0" stroke-width="0.31" textLength="40.00" lengthAdjust="spacingAndGlyphs" >2.9569</text>
<text x="1083.20" y="875.32" font-size="15.70" fill="#f0f0f0" stroke="#f0f0f0" stroke-width="0.31" textLength="40.00" lengthAdjust="spacingAndGlyphs" >9.4762</text>
<text x="1154.00" y="875.32" font-size="15.70" fill="#f0f0f0" stroke="#f0f0f0" stroke-width="0.31" textLength="47.40" lengthAdjust="spacingAndGlyphs" >20.6877</text>
<text x="1224.80" y="875.32" font-size="15.70" fill="#f0f0f0" stroke="#f0f0f0" stroke-width="0.31" textLength="47.40" lengthAdjust="spacingAndGlyphs" >38.0334</text>
<text x="1295.60" y="875.32" font-size="15.70" fill="#f0f0f0" stroke="#f0f0f0" stroke-width="0.31" textLength="47.40" lengthAdjust="spacingAndGlyphs" >61.7899</text>
<text x="1366.40" y="875.32" font-size="15.70" fill="#f0f0f0" stroke="#f0f0f0" stroke-width="0.31" textLength="47.40" lengthAdjust="spacingAndGlyphs" >91.1837</text>
<text x="1437.20" y="875.32" font-size="15.70" fill="#f0f0f0" stroke="#f0f0f0" stroke-width="0.31" textLength="54.80" lengthAdjust="spacingAndGlyphs" >127.4384</text>
<text x="1508.00" y="875.32" font-size="15.70" fill="#f0f0f0" stroke="#f0f0f0" stroke-width="0.31" textLength="54.80" lengthAdjust="spacingAndGlyphs" >172.8450</text>
<text x="1578.80" y="875.32" font-size="15.70" fill="#f0f0f0" stroke="#f0f0f0" stroke-width="0.31" textLength="54.80" lengthAdjust="spacingAndGlyphs" >226.5082</text>
<text x="1649.60" y="875.32" font-size="15.70" fill="#f0f0f0" stroke="#f0f0f0" stroke-width="0.31" textLength="54.80" lengthAdjust="spacingAndGlyphs" >286.2490</text>
<rect x="827.00" y="881.56" width="890.30" height="27.14" fill="#404040" />
<rect x="815.90" y="881.56" width="11.10" height="27.14" fill="#2a2a2a" />
<text x="831.00" y="902.26" font-size="15.70" fill="#f0f0f0" stroke="#f0f0f0" stroke-width="0.31" textLength="101.00" lengthAdjust="spacingAndGlyphs" >Gamma Log/Log</text>
<text x="941.60" y="902.26" font-size="15.70" fill="#f0f0f0" stroke="#f0f0f0" stroke-width="0.31" textLength="40.00" lengthAdjust="spacingAndGlyphs" >1.2778</text>
<text x="1012.40" y="902.26" font-size="15.70" fill="#f0f0f0" stroke="#f0f0f0" stroke-width="0.31" textLength="40.00" lengthAdjust="spacingAndGlyphs" >2.0289</text>
<text x="1083.20" y="902.26" font-size="15.70" fill="#f0f0f0" stroke="#f0f0f0" stroke-width="0.31" textLength="40.00" lengthAdjust="spacingAndGlyphs" >2.1448</text>
<text x="1154.00" y="902.26" font-size="15.70" fill="#f0f0f0" stroke="#f0f0f0" stroke-width="0.31" textLength="40.00" lengthAdjust="spacingAndGlyphs" >2.1786</text>
<text x="1224.80" y="902.26" font-size="15.70" fill="#f0f0f0" stroke="#f0f0f0" stroke-width="0.31" textLength="40.00" lengthAdjust="spacingAndGlyphs" >2.1346</text>
<text x="1295.60" y="902.26" font-size="15.70" fill="#f0f0f0" stroke="#f0f0f0" stroke-width="0.31" textLength="40.00" lengthAdjust="spacingAndGlyphs" >2.1283</text>
<text x="1366.40" y="902.26" font-size="15.70" fill="#f0f0f0" stroke="#f0f0f0" stroke-width="0.31" textLength="40.00" lengthAdjust="spacingAndGlyphs" >2.1109</text>
<text x="1437.20" y="902.26" font-size="15.70" fill="#f0f0f0" stroke="#f0f0f0" stroke-width="0.31" textLength="40.00" lengthAdjust="spacingAndGlyphs" >2.0656</text>
<text x="1508.00" y="902.26" font-size="15.70" fill="#f0f0f0" stroke="#f0f0f0" stroke-width="0.31" textLength="40.00" lengthAdjust="spacingAndGlyphs" >2.0102</text>
<text x="1578.80" y="902.26" font-size="15.70" fill="#f0f0f0" stroke="#f0f0f0" stroke-width="0.31" textLength="40.00" lengthAdjust="spacingAndGlyphs" >1.8630</text>
<text x="1649.60" y="902.26" font-size="15.70" fill="#f0f0f0" stroke="#f0f0f0" stroke-width="0.31" textLength="40.00" lengthAdjust="spacingAndGlyphs" >2.2749</text>
<rect x="827.00" y="908.50" width="890.30" height="27.14" fill="#7f7f7f" />
<rect x="815.90" y="908.50" width="11.10" height="27.14" fill="#202020" />
<text x="831.00" y="929.20" font-size="15.70" fill="#f0f0f0" stroke="#f0f0f0" stroke-width="0.31" textLength="24.50" lengthAdjust="spacingAndGlyphs" >CCT</text>
<text x="941.60" y="929.20" font-size="15.70" fill="#f0f0f0" stroke="#f0f0f0" stroke-width="0.31" textLength="62.20" lengthAdjust="spacingAndGlyphs" >6658.0000</text>
<text x="1012.40" y="929.20" font-size="15.70" fill="#f0f0f0" stroke="#f0f0f0" stroke-width="0.31" textLength="62.20" lengthAdjust="spacingAndGlyphs" >6160.0000</text>
<text x="1083.20" y="929.20" font-size="15.70" fill="#f0f0f0" stroke="#f0f0f0" stroke-width="0.31" textLength="62.20" lengthAdjust="spacingAndGlyphs" >6078.0000</text>
<text x="1154.00" y="929.20" font-size="15.70" fill="#f0f0f0" stroke="#f0f0f0" stroke-width="0.31" textLength="62.20" lengthAdjust="spacingAndGlyphs" >6065.0000</text>
<text x="1224.80" y="929.20" font-size="15.70" fill="#f0f0f0" stroke="#f0f0f0" stroke-width="0.31" textLength="62.20" lengthAdjust="spacingAndGlyphs" >6058.0000</text>
<text x="1295.60" y="929.20" font-size="15.70" fill="#f0f0f0" stroke="#f0f0f0" stroke-width="0.31" textLength="62.20" lengthAdjust="spacingAndGlyphs" >6066.0000</text>
<text x="1366.40" y="929.20" font-size="15.70" fill="#f0f0f0" stroke="#f0f0f0" stroke-width="0.31" textLength="62.20" lengthAdjust="spacingAndGlyphs" >6075.0000</text>
<text x="1437.20" y="929.20" font-size="15.70" fill="#f0f0f0" stroke="#f0f0f0" stroke-width="0.31" textLength="62.20" lengthAdjust="spacingAndGlyphs" >6093.0000</text>
<text x="1508.00" y="929.20" font-size="15.70" fill="#f0f0f0" stroke="#f0f0f0" stroke-width="0.31" textLength="62.20" lengthAdjust="spacingAndGlyphs" >6120.0000</text>
<text x="1578.80" y="929.20" font-size="15.70" fill="#f0f0f0" stroke="#f0f0f0" stroke-width="0.31" textLength="62.20" lengthAdjust="spacingAndGlyphs" >6177.0000</text>
<text x="1649.60" y="929.20" font-size="15.70" fill="#f0f0f0" stroke="#f0f0f0" stroke-width="0.31" textLength="62.20" lengthAdjust="spacingAndGlyphs" >6279.0000</text>
<rect x="827.00" y="935.44" width="890.30" height="27.14" fill="#404040" />
<rect x="815.90" y="935.44" width="11.10" height="27.14" fill="#2a2a2a" />
<text x="831.00" y="956.14" font-size="15.70" fill="#f0f0f0" stroke="#f0f0f0" stroke-width="0.31" textLength="50.00" lengthAdjust="spacingAndGlyphs" >ΔE 2000</text>
<text x="941.60" y="956.14" font-size="15.70" fill="#f0f0f0" stroke="#f0f0f0" stroke-width="0.31" textLength="40.00" lengthAdjust="spacingAndGlyphs" >0.8738</text>
<text x="1012.40" y="956.14" font-size="15.70" fill="#f0f0f0" stroke="#f0f0f0" stroke-width="0.31" textLength="40.00" lengthAdjust="spacingAndGlyphs" >0.7385</text>
<text x="1083.20" y="956.14" font-size="15.70" fill="#f0f0f0" stroke="#f0f0f0" stroke-width="0.31" textLength="40.00" lengthAdjust="spacingAndGlyphs" >1.3540</text>
<text x="1154.00" y="956.14" font-size="15.70" fill="#f0f0f0" stroke="#f0f0f0" stroke-width="0.31" textLength="40.00" lengthAdjust="spacingAndGlyphs" >1.7832</text>
<text x="1224.80" y="956.14" font-size="15.70" fill="#f0f0f0" stroke="#f0f0f0" stroke-width="0.31" textLength="40.00" lengthAdjust="spacingAndGlyphs" >2.5283</text>
<text x="1295.60" y="956.14" font-size="15.70" fill="#f0f0f0" stroke="#f0f0f0" stroke-width="0.31" textLength="40.00" lengthAdjust="spacingAndGlyphs" >2.9583</text>
<text x="1366.40" y="956.14" font-size="15.70" fill="#f0f0f0" stroke="#f0f0f0" stroke-width="0.31" textLength="40.00" lengthAdjust="spacingAndGlyphs" >3.1580</text>
<text x="1437.20" y="956.14" font-size="15.70" fill="#f0f0f0" stroke="#f0f0f0" stroke-width="0.31" textLength="40.00" lengthAdjust="spacingAndGlyphs" >3.2889</text>
<text x="1508.00" y="956.14" font-size="15.70" fill="#f0f0f0" stroke="#f0f0f0" stroke-width="0.31" textLength="40.00" lengthAdjust="spacingAndGlyphs" >3.1963</text>
<text x="1578.80" y="956.14" font-size="15.70" fill="#f0f0f0" stroke="#f0f0f0" stroke-width="0.31" textLength="40.00" lengthAdjust="spacingAndGlyphs" >2.8231</text>
<text x="1649.60" y="956.14" font-size="15.70" fill="#f0f0f0" stroke="#f0f0f0" stroke-width="0.31" textLength="40.00" lengthAdjust="spacingAndGlyphs" >2.0983</text>
<rect x="827.00" y="962.38" width="890.30" height="27.14" fill="#7f7f7f" />
<rect x="815.90" y="962.38" width="11.10" height="27.14" fill="#202020" />
<text x="831.00" y="983.08" font-size="15.70" fill="#f0f0f0" stroke="#f0f0f0" stroke-width="0.31" textLength="34.00" lengthAdjust="spacingAndGlyphs" >dEITP</text>
<text x="941.60" y="983.08" font-size="15.70" fill="#f0f0f0" stroke="#f0f0f0" stroke-width="0.31" textLength="47.40" lengthAdjust="spacingAndGlyphs" >80.3603</text>
<text x="1012.40" y="983.08" font-size="15.70" fill="#f0f0f0" stroke="#f0f0f0" stroke-width="0.31" textLength="40.00" lengthAdjust="spacingAndGlyphs" >3.4830</text>
<text x="1083.20" y="983.08" font-size="15.70" fill="#f0f0f0" stroke="#f0f0f0" stroke-width="0.31" textLength="40.00" lengthAdjust="spacingAndGlyphs" >4.1165</text>
<text x="1154.00" y="983.08" font-size="15.70" fill="#f0f0f0" stroke="#f0f0f0" stroke-width="0.31" textLength="40.00" lengthAdjust="spacingAndGlyphs" >3.8183</text>
<text x="1224.80" y="983.08" font-size="15.70" fill="#f0f0f0" stroke="#f0f0f0" stroke-width="0.31" textLength="40.00" lengthAdjust="spacingAndGlyphs" >5.8024</text>
<text x="1295.60" y="983.08" font-size="15.70" fill="#f0f0f0" stroke="#f0f0f0" stroke-width="0.31" textLength="40.00" lengthAdjust="spacingAndGlyphs" >6.1853</text>
<text x="1366.40" y="983.08" font-size="15.70" fill="#f0f0f0" stroke="#f0f0f0" stroke-width="0.31" textLength="40.00" lengthAdjust="spacingAndGlyphs" >6.2729</text>
<text x="1437.20" y="983.08" font-size="15.70" fill="#f0f0f0" stroke="#f0f0f0" stroke-width="0.31" textLength="40.00" lengthAdjust="spacingAndGlyphs" >6.3376</text>
<text x="1508.00" y="983.08" font-size="15.70" fill="#f0f0f0" stroke="#f0f0f0" stroke-width="0.31" textLength="40.00" lengthAdjust="spacingAndGlyphs" >5.6471</text>
<text x="1578.80" y="983.08" font-size="15.70" fill="#f0f0f0" stroke="#f0f0f0" stroke-width="0.31" textLength="40.00" lengthAdjust="spacingAndGlyphs" >4.5520</text>
<text x="1649.60" y="983.08" font-size="15.70" fill="#f0f0f0" stroke="#f0f0f0" stroke-width="0.31" textLength="40.00" lengthAdjust="spacingAndGlyphs" >2.3612</text>
<rect x="1918.30" y="67.00" width="1.70" height="943.00" fill="#2b2b2b" />
<rect x="150.00" y="1010.50" width="1770.00" height="47.50" fill="url(#gBar)" />
<rect x="150.90" y="1011.4" width="112.2" height="50" rx="3" fill="url(#gSw)" stroke="#4a4a4a" stroke-width="0.6"/>
<rect x="154.40" y="1014.8" width="105.3" height="27.3" rx="2" fill="rgb(0,0,0)" stroke="#5a5a5a" stroke-width="0.6"/>
<text x="206.90" y="1053.50" font-size="9.00" fill="#2e2e2e" text-anchor="middle" font-weight="bold" textLength="5.50" lengthAdjust="spacingAndGlyphs" >0</text>
<rect x="264.85" y="1011.4" width="112.2" height="50" rx="3" fill="url(#gSw)" stroke="#4a4a4a" stroke-width="0.6"/>
<rect x="268.35" y="1014.8" width="105.3" height="27.3" rx="2" fill="rgb(26,26,26)" stroke="#5a5a5a" stroke-width="0.6"/>
<text x="320.85" y="1053.50" font-size="9.00" fill="#2e2e2e" text-anchor="middle" font-weight="bold" textLength="11.00" lengthAdjust="spacingAndGlyphs" >10</text>
<rect x="378.80" y="1011.4" width="112.2" height="50" rx="3" fill="url(#gSw)" stroke="#4a4a4a" stroke-width="0.6"/>
<rect x="382.30" y="1014.8" width="105.3" height="27.3" rx="2" fill="rgb(51,51,51)" stroke="#5a5a5a" stroke-width="0.6"/>
<text x="434.80" y="1053.50" font-size="9.00" fill="#2e2e2e" text-anchor="middle" font-weight="bold" textLength="11.00" lengthAdjust="spacingAndGlyphs" >20</text>
<rect x="492.75" y="1011.4" width="112.2" height="50" rx="3" fill="url(#gSw)" stroke="#4a4a4a" stroke-width="0.6"/>
<rect x="496.25" y="1014.8" width="105.3" height="27.3" rx="2" fill="rgb(76,76,76)" stroke="#5a5a5a" stroke-width="0.6"/>
<text x="548.75" y="1053.50" font-size="9.00" fill="#2e2e2e" text-anchor="middle" font-weight="bold" textLength="11.00" lengthAdjust="spacingAndGlyphs" >30</text>
<rect x="606.70" y="1011.4" width="112.2" height="50" rx="3" fill="url(#gSw)" stroke="#4a4a4a" stroke-width="0.6"/>
<rect x="610.20" y="1014.8" width="105.3" height="27.3" rx="2" fill="rgb(102,102,102)" stroke="#5a5a5a" stroke-width="0.6"/>
<text x="662.70" y="1053.50" font-size="9.00" fill="#2e2e2e" text-anchor="middle" font-weight="bold" textLength="11.00" lengthAdjust="spacingAndGlyphs" >40</text>
<rect x="720.65" y="1011.4" width="112.2" height="50" rx="3" fill="url(#gSw)" stroke="#4a4a4a" stroke-width="0.6"/>
<rect x="724.15" y="1014.8" width="105.3" height="27.3" rx="2" fill="rgb(128,128,128)" stroke="#5a5a5a" stroke-width="0.6"/>
<text x="776.65" y="1053.50" font-size="9.00" fill="#2e2e2e" text-anchor="middle" font-weight="bold" textLength="11.00" lengthAdjust="spacingAndGlyphs" >50</text>
<rect x="834.60" y="1011.4" width="112.2" height="50" rx="3" fill="url(#gSw)" stroke="#4a4a4a" stroke-width="0.6"/>
<rect x="838.10" y="1014.8" width="105.3" height="27.3" rx="2" fill="rgb(153,153,153)" stroke="#5a5a5a" stroke-width="0.6"/>
<text x="890.60" y="1053.50" font-size="9.00" fill="#2e2e2e" text-anchor="middle" font-weight="bold" textLength="11.00" lengthAdjust="spacingAndGlyphs" >60</text>
<rect x="948.55" y="1011.4" width="112.2" height="50" rx="3" fill="url(#gSw)" stroke="#4a4a4a" stroke-width="0.6"/>
<rect x="952.05" y="1014.8" width="105.3" height="27.3" rx="2" fill="rgb(178,178,178)" stroke="#5a5a5a" stroke-width="0.6"/>
<text x="1004.55" y="1053.50" font-size="9.00" fill="#2e2e2e" text-anchor="middle" font-weight="bold" textLength="11.00" lengthAdjust="spacingAndGlyphs" >70</text>
<rect x="1062.50" y="1011.4" width="112.2" height="50" rx="3" fill="url(#gSw)" stroke="#4a4a4a" stroke-width="0.6"/>
<rect x="1066.00" y="1014.8" width="105.3" height="27.3" rx="2" fill="rgb(204,204,204)" stroke="#5a5a5a" stroke-width="0.6"/>
<text x="1118.50" y="1053.50" font-size="9.00" fill="#2e2e2e" text-anchor="middle" font-weight="bold" textLength="11.00" lengthAdjust="spacingAndGlyphs" >80</text>
<rect x="1176.45" y="1011.4" width="112.2" height="50" rx="3" fill="url(#gSw)" stroke="#4a4a4a" stroke-width="0.6"/>
<rect x="1179.95" y="1014.8" width="105.3" height="27.3" rx="2" fill="rgb(230,230,230)" stroke="#5a5a5a" stroke-width="0.6"/>
<text x="1232.45" y="1053.50" font-size="9.00" fill="#2e2e2e" text-anchor="middle" font-weight="bold" textLength="11.00" lengthAdjust="spacingAndGlyphs" >90</text>
<rect x="1290.40" y="1011.4" width="111" height="50" rx="3" fill="#1c1c1c"/>
<rect x="1291.60" y="1013.6" width="108.6" height="50" rx="2" fill="#2e2e2e"/>
<rect x="1293.90" y="1014.8" width="105.3" height="27.3" rx="2" fill="#ffffff" stroke="#181818" stroke-width="1"/>
<text x="1345.90" y="1053.50" font-size="9.00" fill="#ffffff" text-anchor="middle" font-weight="bold" textLength="14.50" lengthAdjust="spacingAndGlyphs" >100</text>
<rect x="1677" y="1015" width="243" height="43" fill="#2c2c2c"/>
<rect x="1714" y="1012" width="172" height="19" rx="2" fill="#5c5c5c"/>
<circle cx="1733.0" cy="1020" r="7" fill="#707070"/>
<line x1="1748.00" y1="1012.00" x2="1748.00" y2="1031.00" stroke="#444" stroke-width="1" />
<circle cx="1763.0" cy="1020" r="7" fill="#707070"/>
<line x1="1778.00" y1="1012.00" x2="1778.00" y2="1031.00" stroke="#444" stroke-width="1" />
<circle cx="1793.0" cy="1020" r="7" fill="#707070"/>
<line x1="1808.00" y1="1012.00" x2="1808.00" y2="1031.00" stroke="#444" stroke-width="1" />
<circle cx="1823.0" cy="1020" r="7" fill="#707070"/>
<line x1="1838.00" y1="1012.00" x2="1838.00" y2="1031.00" stroke="#444" stroke-width="1" />
<circle cx="1853.0" cy="1020" r="7" fill="#707070"/>
<line x1="1868.00" y1="1012.00" x2="1868.00" y2="1031.00" stroke="#444" stroke-width="1" />
<circle cx="1905" cy="1019" r="7" fill="#444"/>
<rect x="1678" y="1028" width="36" height="30" rx="2" fill="url(#gNav)"/>
<rect x="1684.5" y="1033" width="22" height="20" rx="3" fill="none" stroke="#222" stroke-width="2"/>
<rect x="1690.50" y="1038.00" width="9.00" height="9.00" fill="#000" />
<rect x="1715" y="1035" width="101.5" height="23" rx="2" fill="url(#gNav)" stroke="#aaa" stroke-width="0.6"/>
<rect x="1817" y="1035" width="101.5" height="23" rx="2" fill="url(#gNav)" stroke="#aaa" stroke-width="0.6"/>
<circle cx="1737.5" cy="1046" r="7.5" fill="#7a7a7a" stroke="#9c9c9c" stroke-width="1"/>
<circle cx="1897.7" cy="1046" r="7.5" fill="#7a7a7a" stroke="#9c9c9c" stroke-width="1"/>
<text x="1737.50" y="1050.00" font-size="13.00" fill="#333" stroke="#333" stroke-width="0.26" text-anchor="middle" >«</text>
<text x="1897.70" y="1050.00" font-size="13.00" fill="#333" stroke="#333" stroke-width="0.26" text-anchor="middle" >»</text>
<text x="1757.00" y="1052.50" font-size="18.02" fill="#2a2a2a" stroke="#2a2a2a" stroke-width="0.36" textLength="39.00" lengthAdjust="spacingAndGlyphs" >Back</text>
<text x="1837.50" y="1052.50" font-size="18.02" fill="#2a2a2a" stroke="#2a2a2a" stroke-width="0.36" textLength="38.50" lengthAdjust="spacingAndGlyphs" >Next</text>
<g opacity="0.9">
<path d="M1641,1029 L1697,1031.5 L1657,1043 L1632.5,1033 L1631,997 L1667,1004 L1670,1027" fill="none" stroke="#bdbdbd" stroke-width="5.4" stroke-linejoin="miter" opacity="0.7"/>
<path d="M1641,1029 L1697,1031.5 L1657,1043 L1632.5,1033 L1631,997 L1667,1004 L1670,1027" fill="none" stroke="#932830" stroke-width="3.2" stroke-linejoin="miter"/>
<path d="M1642.5,1009.6 L1653.3,1023.3 L1674.2,996.25" fill="none" stroke="#bdbdbd" stroke-width="6" opacity="0.7"/>
<path d="M1642.5,1009.6 L1653.3,1023.3 L1674.2,996.25" fill="none" stroke="#2e2e2e" stroke-width="3.8"/>
<text x="1675.80" y="1025.00" font-size="29.07" fill="#9c2c34" font-weight="bold" textLength="147.50" lengthAdjust="spacingAndGlyphs" stroke="#c8c8c8" stroke-width="2" paint-order="stroke" fill-opacity="0.85">NOTEBOOK</text>
<text x="1824.20" y="1025.00" font-size="29.07" fill="#2c2c2c" font-weight="bold" textLength="88.30" lengthAdjust="spacingAndGlyphs" stroke="#c8c8c8" stroke-width="2" paint-order="stroke">CHECK</text>
</g>
</svg>
</body></html>
